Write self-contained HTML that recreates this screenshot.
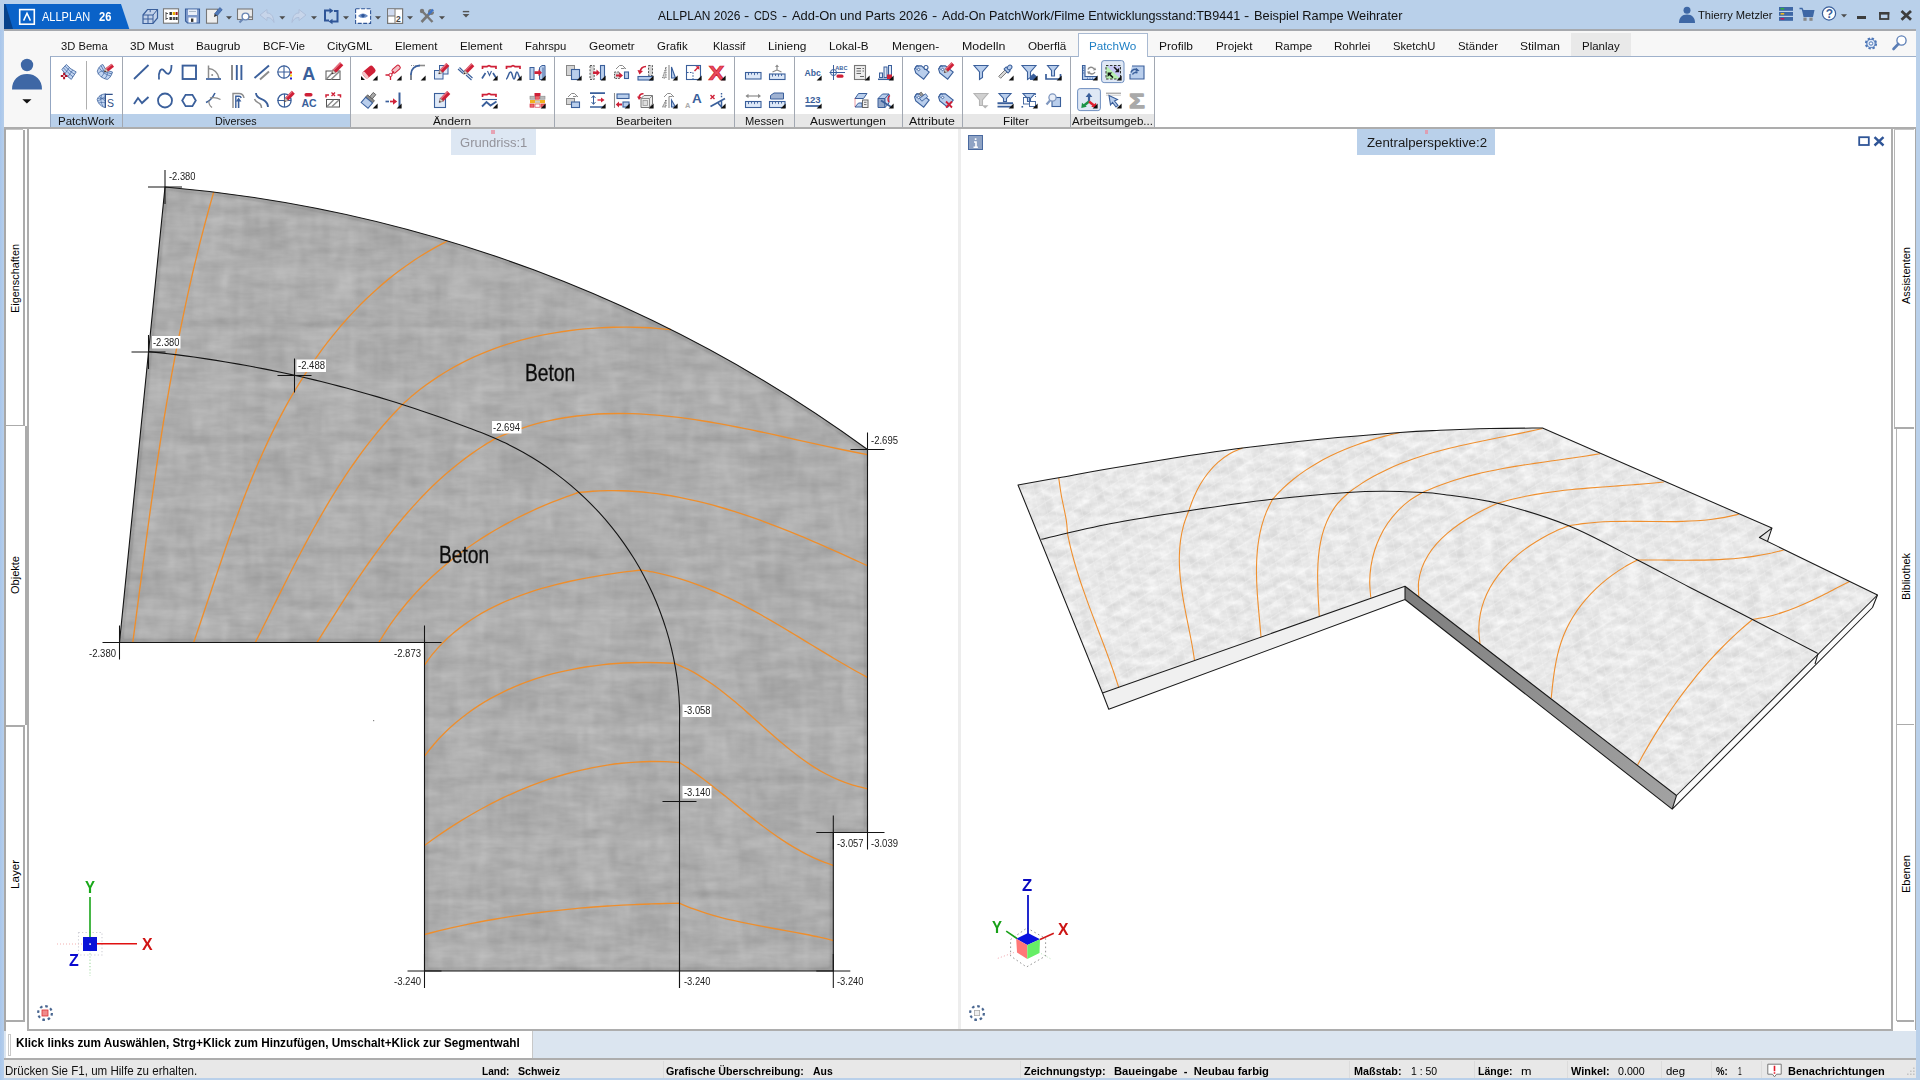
<!DOCTYPE html>
<html lang="de"><head><meta charset="utf-8"><title>ALLPLAN 2026</title>
<style>
html,body{margin:0;padding:0;background:#fff;}
body{width:1920px;height:1080px;overflow:hidden;font-family:"Liberation Sans",sans-serif;}
#app{position:relative;width:1920px;height:1080px;overflow:hidden;background:#b9d0ea;}
.a{position:absolute;}
.t{position:absolute;white-space:nowrap;line-height:1;transform-origin:0 0;display:block;}
.v{position:absolute;white-space:nowrap;line-height:1;transform-origin:0 0;display:block;font-size:12px;color:#000;}
svg{position:absolute;left:0;top:0;overflow:visible;}

</style></head>
<body>
<div id="app">
<div class="a" id="titlebar" style="left:0;top:0;width:1920px;height:30px;background:#b9d0ea"></div>
<div class="a" style="left:0px;top:30px;width:4.3px;height:1050px;background:linear-gradient(90deg,#a8c6ec,#b6ceea);"></div>
<div class="a" style="left:4px;top:30px;width:1912px;height:98px;background:#f7f7f7;"></div>
<div class="a" style="left:4px;top:28.9px;width:1912px;height:1.9px;background:#a6a9ae;"></div>
<svg width="140" height="32" viewBox="0 0 140 32"><polygon points="4,4 121,4 129.3,29 4,29" fill="#0a62c8"/><polygon points="4,4 5.5,4 13,29 4,29" fill="#07428a"/><rect x="19.7" y="9.6" width="14.6" height="14.6" fill="none" stroke="#fff" stroke-width="1.6"/><path d="M23.6 20.6 L27 13.2 L30.4 20.6" fill="none" stroke="#fff" stroke-width="1.5"/></svg>
<span class="t" style="left:41.50px;top:11.24px;font-size:12px;color:#fff;transform:scaleX(0.9165);">ALLPLAN</span>
<span class="t" style="left:98.80px;top:11.24px;font-size:12px;color:#fff;font-weight:bold;transform:scaleX(0.9291);">26</span>
<span class="t" style="left:658.30px;top:9.30px;font-size:13px;color:#111;transform:scaleX(0.9195);">ALLPLAN 2026</span>
<span class="t" style="left:744.20px;top:9.30px;font-size:13px;color:#111;transform:scaleX(1.2013);">-</span>
<span class="t" style="left:754.30px;top:9.30px;font-size:13px;color:#111;transform:scaleX(0.8379);">CDS</span>
<span class="t" style="left:781.80px;top:9.30px;font-size:13px;color:#111;transform:scaleX(1.2013);">-</span>
<span class="t" style="left:791.70px;top:9.30px;font-size:13px;color:#111;transform:scaleX(0.9928);">Add-On und Parts 2026</span>
<span class="t" style="left:931.80px;top:9.30px;font-size:13px;color:#111;transform:scaleX(1.2013);">-</span>
<span class="t" style="left:941.70px;top:9.30px;font-size:13px;color:#111;transform:scaleX(0.9699);">Add-On PatchWork/Filme Entwicklungsstand:TB9441</span>
<span class="t" style="left:1244.20px;top:9.30px;font-size:13px;color:#111;transform:scaleX(1.2013);">-</span>
<span class="t" style="left:1254.30px;top:9.30px;font-size:13px;color:#111;transform:scaleX(0.9843);">Beispiel Rampe Weihrater</span>
<span class="t" style="left:1698.30px;top:9.73px;font-size:11.3px;color:#111;transform:scaleX(0.9876);">Thierry Metzler</span>
<div class="a" style="left:50px;top:55.8px;width:1866px;height:71.7px;background:#fff;border-top:1px solid #9fb1cb;border-left:1px solid #93a6c2;box-sizing:border-box;"></div>
<div class="a" style="left:1571px;top:33px;width:60px;height:22.8px;background:#e9e9e9;"></div>
<div class="a" style="left:1078px;top:33px;width:70px;height:24px;background:#fff;border:1px solid #a9bad2;border-bottom:none;box-sizing:border-box;"></div>
<span class="t" style="left:61.00px;top:40.75px;font-size:11.4px;color:#111;transform:scaleX(0.9828);">3D Bema</span>
<span class="t" style="left:130.30px;top:40.75px;font-size:11.4px;color:#111;transform:scaleX(1.0296);">3D Must</span>
<span class="t" style="left:196.30px;top:40.75px;font-size:11.4px;color:#111;transform:scaleX(1.0302);">Baugrub</span>
<span class="t" style="left:263.30px;top:40.75px;font-size:11.4px;color:#111;transform:scaleX(0.9798);">BCF-Vie</span>
<span class="t" style="left:327.30px;top:40.75px;font-size:11.4px;color:#111;transform:scaleX(1.0240);">CityGML</span>
<span class="t" style="left:395.30px;top:40.75px;font-size:11.4px;color:#111;transform:scaleX(1.0139);">Element</span>
<span class="t" style="left:460.30px;top:40.75px;font-size:11.4px;color:#111;transform:scaleX(1.0139);">Element</span>
<span class="t" style="left:525.30px;top:40.75px;font-size:11.4px;color:#111;transform:scaleX(0.9900);">Fahrspu</span>
<span class="t" style="left:589.30px;top:40.75px;font-size:11.4px;color:#111;transform:scaleX(1.0306);">Geometr</span>
<span class="t" style="left:657.30px;top:40.75px;font-size:11.4px;color:#111;transform:scaleX(1.0098);">Grafik</span>
<span class="t" style="left:713.30px;top:40.75px;font-size:11.4px;color:#111;transform:scaleX(0.9650);">Klassif</span>
<span class="t" style="left:768.30px;top:40.75px;font-size:11.4px;color:#111;transform:scaleX(1.0445);">Linieng</span>
<span class="t" style="left:829.30px;top:40.75px;font-size:11.4px;color:#111;transform:scaleX(1.0271);">Lokal-B</span>
<span class="t" style="left:891.70px;top:40.75px;font-size:11.4px;color:#111;transform:scaleX(1.0514);">Mengen-</span>
<span class="t" style="left:962.30px;top:40.75px;font-size:11.4px;color:#111;transform:scaleX(1.0872);">Modelln</span>
<span class="t" style="left:1028.30px;top:40.75px;font-size:11.4px;color:#111;transform:scaleX(1.0273);">Oberflä</span>
<span class="t" style="left:1089.30px;top:40.75px;font-size:11.4px;color:#1e7fc4;transform:scaleX(1.0295);">PatchWo</span>
<span class="t" style="left:1159.30px;top:40.75px;font-size:11.4px;color:#111;transform:scaleX(1.0522);">Profilb</span>
<span class="t" style="left:1216.30px;top:40.75px;font-size:11.4px;color:#111;transform:scaleX(1.0260);">Projekt</span>
<span class="t" style="left:1275.00px;top:40.75px;font-size:11.4px;color:#111;transform:scaleX(1.0150);">Rampe</span>
<span class="t" style="left:1334.30px;top:40.75px;font-size:11.4px;color:#111;transform:scaleX(1.0079);">Rohrlei</span>
<span class="t" style="left:1393.30px;top:40.75px;font-size:11.4px;color:#111;transform:scaleX(0.9841);">SketchU</span>
<span class="t" style="left:1458.30px;top:40.75px;font-size:11.4px;color:#111;transform:scaleX(1.0019);">Ständer</span>
<span class="t" style="left:1520.00px;top:40.75px;font-size:11.4px;color:#111;transform:scaleX(1.0523);">Stilman</span>
<span class="t" style="left:1582.30px;top:40.75px;font-size:11.4px;color:#111;transform:scaleX(1.0083);">Planlay</span>
<div class="a" style="left:50.5px;top:114px;width:72.3px;height:13.3px;background:#b9d0ea;"></div>
<div class="a" style="left:122.8px;top:114px;width:228.0px;height:13.3px;background:#b9d0ea;"></div>
<div class="a" style="left:350.8px;top:114px;width:203.99999999999994px;height:13.3px;background:#e7e7e7;"></div>
<div class="a" style="left:554.8px;top:114px;width:180.0px;height:13.3px;background:#e7e7e7;"></div>
<div class="a" style="left:734.8px;top:114px;width:60.0px;height:13.3px;background:#e7e7e7;"></div>
<div class="a" style="left:794.8px;top:114px;width:108.0px;height:13.3px;background:#e7e7e7;"></div>
<div class="a" style="left:902.8px;top:114px;width:60.0px;height:13.3px;background:#e7e7e7;"></div>
<div class="a" style="left:962.8px;top:114px;width:108.29999999999995px;height:13.3px;background:#e7e7e7;"></div>
<div class="a" style="left:1071.1px;top:114px;width:83.70000000000005px;height:13.3px;background:#e7e7e7;"></div>
<div class="a" style="left:121.8px;top:57px;width:1px;height:70px;background:#a2a8b2;"></div>
<div class="a" style="left:349.8px;top:57px;width:1px;height:70px;background:#a2a8b2;"></div>
<div class="a" style="left:553.8px;top:57px;width:1px;height:70px;background:#a2a8b2;"></div>
<div class="a" style="left:733.8px;top:57px;width:1px;height:70px;background:#a2a8b2;"></div>
<div class="a" style="left:793.8px;top:57px;width:1px;height:70px;background:#a2a8b2;"></div>
<div class="a" style="left:901.8px;top:57px;width:1px;height:70px;background:#a2a8b2;"></div>
<div class="a" style="left:961.8px;top:57px;width:1px;height:70px;background:#a2a8b2;"></div>
<div class="a" style="left:1070.1px;top:57px;width:1px;height:70px;background:#a2a8b2;"></div>
<div class="a" style="left:1153.8px;top:57px;width:1px;height:70px;background:#a2a8b2;"></div>
<span class="t" style="left:58.00px;top:115.55px;font-size:11.4px;color:#111;transform:scaleX(1.0137);">PatchWork</span>
<span class="t" style="left:215.30px;top:115.55px;font-size:11.4px;color:#111;transform:scaleX(0.9404);">Diverses</span>
<span class="t" style="left:433.00px;top:115.55px;font-size:11.4px;color:#111;transform:scaleX(1.0338);">Ändern</span>
<span class="t" style="left:616.00px;top:115.55px;font-size:11.4px;color:#111;transform:scaleX(1.0157);">Bearbeiten</span>
<span class="t" style="left:745.00px;top:115.55px;font-size:11.4px;color:#111;transform:scaleX(0.9771);">Messen</span>
<span class="t" style="left:810.00px;top:115.55px;font-size:11.4px;color:#111;transform:scaleX(1.0429);">Auswertungen</span>
<span class="t" style="left:909.00px;top:115.55px;font-size:11.4px;color:#111;transform:scaleX(1.0836);">Attribute</span>
<span class="t" style="left:1003.30px;top:115.55px;font-size:11.4px;color:#111;transform:scaleX(1.0264);">Filter</span>
<span class="t" style="left:1072.00px;top:115.55px;font-size:11.4px;color:#111;transform:scaleX(1.0146);">Arbeitsumgeb...</span>
<div class="a" style="left:4px;top:127px;width:1912px;height:1.8px;background:#adadad;"></div>
<div class="a" style="left:4px;top:128.8px;width:1912px;height:902.2px;background:#fff;"></div>
<div class="a" style="left:4px;top:128.8px;width:1.5px;height:930px;background:#a8a8a8;"></div>
<div class="a" style="left:27.3px;top:128.8px;width:1.8px;height:901px;background:#adadad;"></div>
<div class="a" style="left:1891.3px;top:128.8px;width:1.8px;height:901px;background:#adadad;"></div>
<div class="a" style="left:1914.5px;top:128.8px;width:1.5px;height:901px;background:#a8a8a8;"></div>
<div class="a" style="left:958px;top:129px;width:3px;height:900px;background:#ededed;"></div>
<div class="a" style="left:27.3px;top:1029px;width:1866px;height:1.8px;background:#adadad;"></div>
<div class="a" style="left:5.6px;top:129.2px;width:17.5px;height:1px;background:#c4c4c4;"></div>
<div class="a" style="left:5.6px;top:130px;width:17.5px;height:294.5px;background:#fff;"></div><div class="a" style="left:23.1px;top:130px;width:1.7px;height:296.0px;background:#ababab;"></div><div class="a" style="left:5.6px;top:424.5px;width:17.5px;height:1.5px;background:#ababab;"></div>
<div class="a" style="left:5.6px;top:426px;width:19.4px;height:299px;background:#fff;"></div><div class="a" style="left:25px;top:426px;width:2.5px;height:299px;background:#ababab;"></div><div class="a" style="left:5.6px;top:725px;width:19.4px;height:1.5px;background:#ababab;"></div>
<div class="a" style="left:5.6px;top:727px;width:17.5px;height:293px;background:#fff;"></div><div class="a" style="left:23.1px;top:727px;width:1.7px;height:294.5px;background:#ababab;"></div><div class="a" style="left:5.6px;top:1020px;width:17.5px;height:1.5px;background:#ababab;"></div>
<div class="a" style="left:1894.4px;top:129.2px;width:20px;height:1px;background:#c4c4c4;"></div>
<div class="a" style="left:1894.3px;top:130px;width:1px;height:298.5px;background:#b4b4b4;"></div><div class="a" style="left:1895.3px;top:427px;width:19.100000000000136px;height:1.6px;background:#ababab;"></div>
<div class="a" style="left:1896px;top:428.6px;width:1px;height:296.5px;background:#b4b4b4;"></div><div class="a" style="left:1897px;top:723.6px;width:17.40000000000009px;height:1.6px;background:#ababab;"></div>
<div class="a" style="left:1896px;top:725.4px;width:1px;height:296.1px;background:#b4b4b4;"></div><div class="a" style="left:1897px;top:1020px;width:17.40000000000009px;height:1.6px;background:#ababab;"></div>
<span class="v" style="left:10.48px;top:312.50px;font-size:11px;transform:rotate(-90deg) scaleX(0.9898);">Eigenschaften</span>
<span class="v" style="left:10.48px;top:594.00px;font-size:11px;transform:rotate(-90deg) scaleX(1.0025);">Objekte</span>
<span class="v" style="left:10.48px;top:889.00px;font-size:11px;transform:rotate(-90deg) scaleX(1.0540);">Layer</span>
<span class="v" style="left:1900.88px;top:304.00px;font-size:11px;transform:rotate(-90deg) scaleX(1.0024);">Assistenten</span>
<span class="v" style="left:1900.88px;top:600.00px;font-size:11px;transform:rotate(-90deg) scaleX(0.9855);">Bibliothek</span>
<span class="v" style="left:1900.88px;top:892.50px;font-size:11px;transform:rotate(-90deg) scaleX(1.0020);">Ebenen</span>
<div class="a" style="left:451.2px;top:129px;width:84.8px;height:25.8px;background:#dde7f3;"></div>
<div class="a" style="left:1357.2px;top:129px;width:138.3px;height:25.8px;background:#b9d0ea;"></div>
<div class="a" style="left:491.3px;top:130.4px;width:3.4px;height:3.2px;background:#e6a3b4;"></div>
<div class="a" style="left:1424.8px;top:130.4px;width:3.2px;height:3.2px;background:#dd9fb3;"></div>
<span class="t" style="left:460.30px;top:136.52px;font-size:12.5px;color:#93939b;transform:scaleX(1.0418);">Grundriss:1</span>
<span class="t" style="left:1367.00px;top:136.72px;font-size:12.5px;color:#1a1a1a;transform:scaleX(1.0597);">Zentralperspektive:2</span>
<div class="a" style="left:4px;top:1030.8px;width:1912px;height:27.5px;background:#dbe5f0;"></div>
<div class="a" style="left:5.5px;top:1030.8px;width:527.5px;height:27.5px;background:#fff;border-right:1.5px solid #c8c8c8;box-sizing:border-box;"></div>
<div class="a" style="left:8px;top:1033.5px;width:3px;height:22px;background:#fff;border:1px solid #c9c9c9;box-sizing:border-box;"></div>
<div class="a" style="left:4px;top:1058.2px;width:1912px;height:1.8px;background:#adadad;"></div>
<div class="a" style="left:4px;top:1060px;width:1912px;height:18px;background:#e8e8e8;"></div>
<span class="t" style="left:16.30px;top:1037.43px;font-size:12.6px;color:#000;font-weight:bold;transform:scaleX(0.9345);">Klick links zum Auswählen, Strg+Klick zum Hinzufügen, Umschalt+Klick zur Segmentwahl</span>
<span class="t" style="left:5.30px;top:1064.84px;font-size:12px;color:#111;transform:scaleX(0.9639);">Drücken Sie F1, um Hilfe zu erhalten.</span>
<span class="t" style="left:482.00px;top:1065.18px;font-size:11.6px;color:#000;font-weight:bold;transform:scaleX(0.8711);">Land:</span>
<span class="t" style="left:518.00px;top:1065.18px;font-size:11.6px;color:#000;font-weight:bold;transform:scaleX(0.9176);">Schweiz</span>
<span class="t" style="left:666.30px;top:1065.18px;font-size:11.6px;color:#000;font-weight:bold;transform:scaleX(0.9228);">Grafische Überschreibung:</span>
<span class="t" style="left:813.30px;top:1065.18px;font-size:11.6px;color:#000;font-weight:bold;transform:scaleX(0.8990);">Aus</span>
<span class="t" style="left:1023.80px;top:1065.18px;font-size:11.6px;color:#000;font-weight:bold;transform:scaleX(0.9462);">Zeichnungstyp:</span>
<span class="t" style="left:1114.30px;top:1065.18px;font-size:11.6px;color:#000;font-weight:bold;transform:scaleX(0.9659);white-space:pre;">Baueingabe  -  Neubau farbig</span>
<span class="t" style="left:1353.80px;top:1065.18px;font-size:11.6px;color:#000;font-weight:bold;transform:scaleX(0.9330);">Maßstab:</span>
<span class="t" style="left:1410.80px;top:1065.18px;font-size:11.6px;color:#000;transform:scaleX(0.9028);">1 : 50</span>
<span class="t" style="left:1478.00px;top:1065.18px;font-size:11.6px;color:#000;font-weight:bold;transform:scaleX(0.9074);">Länge:</span>
<span class="t" style="left:1521.30px;top:1065.18px;font-size:11.6px;color:#000;transform:scaleX(1.0867);">m</span>
<span class="t" style="left:1571.30px;top:1065.18px;font-size:11.6px;color:#000;font-weight:bold;transform:scaleX(0.9406);">Winkel:</span>
<span class="t" style="left:1618.30px;top:1065.18px;font-size:11.6px;color:#000;transform:scaleX(0.9199);">0.000</span>
<span class="t" style="left:1665.50px;top:1065.18px;font-size:11.6px;color:#000;transform:scaleX(0.9818);">deg</span>
<span class="t" style="left:1715.80px;top:1065.18px;font-size:11.6px;color:#000;font-weight:bold;transform:scaleX(0.8253);">%:</span>
<span class="t" style="left:1737.50px;top:1065.18px;font-size:11.6px;color:#000;transform:scaleX(0.5891);">1</span>
<span class="t" style="left:1787.50px;top:1065.18px;font-size:11.6px;color:#000;font-weight:bold;transform:scaleX(0.9506);">Benachrichtungen</span>
<div class="a" style="left:662.5px;top:1061px;width:1px;height:17px;background:#dcdcdc;"></div>
<div class="a" style="left:1020px;top:1061px;width:1px;height:17px;background:#dcdcdc;"></div>
<div class="a" style="left:1348.8px;top:1061px;width:1px;height:17px;background:#dcdcdc;"></div>
<div class="a" style="left:1473.8px;top:1061px;width:1px;height:17px;background:#dcdcdc;"></div>
<div class="a" style="left:1567px;top:1061px;width:1px;height:17px;background:#dcdcdc;"></div>
<div class="a" style="left:1661.3px;top:1061px;width:1px;height:17px;background:#dcdcdc;"></div>
<div class="a" style="left:1711.3px;top:1061px;width:1px;height:17px;background:#dcdcdc;"></div>
<div class="a" style="left:1761.3px;top:1061px;width:1px;height:17px;background:#dcdcdc;"></div>
<svg width="1920" height="1080" viewBox="0 0 1920 1080"><path d="M1767.8 1064.2 h13.4 v10 h-4.6 l-2.1 2.6 l-2.1 -2.6 h-4.6 z" fill="#fff" stroke="#777" stroke-width="1"/><path d="M1774.5 1065.8 v5.4 M1774.5 1072.3 v1.5" stroke="#e21c2a" stroke-width="1.6"/><path d="M1913 1067.5h1.6v1.6h-1.6z M1910 1070.5h1.6v1.6h-1.6z M1913 1070.5h1.6v1.6h-1.6z M1907 1073.5h1.6v1.6h-1.6z M1910 1073.5h1.6v1.6h-1.6z M1913 1073.5h1.6v1.6h-1.6z" fill="#c4c4c4"/></svg>
<svg width="1920" height="130" viewBox="0 0 1920 130" id="icons"><g fill="#3e67a5"><circle cx="27" cy="65" r="6.2"/><path d="M12 89.5 C12 80 18 74 27 74 C36 74 42 80 42 89.5 Z"/></g>
<polygon points="22.3,99.2 31.5,99.2 26.9,103.6" fill="#111"/>
<g transform="translate(60.0,64.0)"><path d="M1.9 5.4 L6.3 0.5 Q10.5 5.5 16.2 7.9 L11.3 15.4 Q5.5 12 1.9 5.4 Z" fill="#c3d6f2" stroke="#3a5f9b" stroke-width="0.8" /><path d="M3.4 3.8 Q8 9 13 12.9 M4.9 2.1 Q9.5 7.5 14.6 10.3 M5 9.6 L9.3 3.7 M8 12.6 L12.6 6.2" fill="none" stroke="#3a5f9b" stroke-width="0.7" /><path d="M4.1 8.7 V15.3 M0.8 12 H7.4" fill="none" stroke="#b01428" stroke-width="2" /><rect x="3.3" y="11.2" width="1.6" height="1.6" fill="#fff"/></g>
<g transform="translate(97.0,64.0)"><path d="M0.3 7.2 C1.5 3 4 1 5.8 0.5 L9.2 6.2 L15.5 8 C14.5 12 12 14.8 10.4 15.4 C5 14.5 1.2 11 0.3 7.2 Z" fill="#c3d6f2" stroke="#3a5f9b" stroke-width="0.8" /><path d="M2.2 3.6 C4 7 8 10.5 13.6 12 M4 1.6 L7.2 7.5 L15 10 M0.8 9.8 C3 7.5 5 6.5 7 7.2 M4.3 13 C6 11 7.5 9 7.2 7.5 M7.5 14.8 C9.5 13 10.5 11 10.3 8.6" fill="none" stroke="#3a5f9b" stroke-width="0.7" /><g transform="translate(7.30,7.90) rotate(-38)"><path d="M0 0 L3.2 -2 H10.8 V2 H3.2 Z" fill="#cf2037"/><path d="M3.2 -2 H10.8 V-0.7 H3.2 Z" fill="#e4707f"/><path d="M0 0 L3.2 -2 V2 Z" fill="#f0e4c8" stroke="#777" stroke-width="0.4"/><path d="M0 0 L1.6 -1 V1 Z" fill="#111"/></g></g>
<g transform="translate(97.0,92.0)"><path d="M8.3 2 C4 2 0.6 5 0.2 7.6 C1 11.5 4.5 15 8.3 15.5 Z" fill="#c3d6f2" stroke="#3a5f9b" stroke-width="0.8" /><path d="M4.6 3 C3.2 6.5 3.8 11 6 14.6 M0.6 6.6 C3 6 6 6.2 8.3 6.8 M1.6 11 C4 10.2 6 10.3 8.3 10.8 M2.2 4.4 L8.3 9 M1 9 L8.3 4.6" fill="none" stroke="#3a5f9b" stroke-width="0.6" /><path d="M8.4 1.4 V15.8 M8.4 2.4 H15.7" fill="none" stroke="#2f4f88" stroke-width="1.1" /><text x="10.1" y="14.6" font-size="10.5" fill="#2f4f88"  font-family="Liberation Sans, sans-serif" >S</text></g>
<rect x="86" y="61" width="0.9" height="48.5" fill="#a6a6a6"/>
<g transform="translate(133.0,64.0)"><path d="M1 15 L15.5 1" fill="none" stroke="#3a5f9b" stroke-width="1.8" /></g>
<g transform="translate(157.0,64.0)"><path d="M2 15.5 C1 8 4 3.5 6.5 6 C8.5 8.5 10 11 12 9.5 C14 8 14.5 4 14.5 1" fill="none" stroke="#3a5f9b" stroke-width="1.8" /></g>
<g transform="translate(181.0,64.0)"><rect x="1.6" y="1.6" width="13.4" height="13.4" fill="none" stroke="#3a5f9b" stroke-width="1.9"/></g>
<g transform="translate(205.0,64.0)"><path d="M3.5 1.5 V14" fill="none" stroke="#8c8c8c" stroke-width="1.5" /><path d="M3.5 4.5 C9 5 13 9 14 14.5" fill="none" stroke="#8c8c8c" stroke-width="1.5" /><path d="M1 15 H16" fill="none" stroke="#3a5f9b" stroke-width="1.7" /><circle cx="7.2" cy="11" r="1" fill="#8c8c8c"/></g>
<g transform="translate(229.0,64.0)"><path d="M3 1 V16" fill="none" stroke="#8c8c8c" stroke-width="2" /><path d="M7.8 1 V16 M12.4 1 V16" fill="none" stroke="#3a5f9b" stroke-width="1.9" /></g>
<g transform="translate(253.0,64.0)"><path d="M1.5 14 L16 1.5" fill="none" stroke="#3a5f9b" stroke-width="1.9" /><path d="M7 15.5 L16 7.5" fill="none" stroke="#8c8c8c" stroke-width="1.9" /></g>
<g transform="translate(277.0,64.0)"><circle cx="7" cy="8" r="6.2" fill="none" stroke="#3a5f9b" stroke-width="1.2"/><path d="M0.5 8 H13.5 M7 1.5 V14.5" fill="none" stroke="#3a5f9b" stroke-width="1.1" /><rect x="13" y="7.5" width="2" height="2" fill="#d11"/><rect x="13" y="10.5" width="2" height="2" fill="#fc0"/><rect x="13" y="13.5" width="2" height="2" fill="#22c"/></g>
<g transform="translate(301.0,64.0)"><text x="1.2" y="15.6" font-size="18" fill="#3a5f9b" font-weight="bold" font-family="Liberation Sans, sans-serif" >A</text></g>
<g transform="translate(325.0,64.0)"><rect x="1" y="7" width="14" height="8.5" fill="#fff" stroke="#555" stroke-width="1" /><path d="M1 15.5 L9 7 M6 15.5 L15 7" fill="none" stroke="#8c8c8c" stroke-width="1.6" /><g transform="translate(6.70,10.08) rotate(-46) scale(1.15)"><path d="M0 0 L3.4 -2 H12.5 V2 H3.4 Z" fill="#cf2037"/><path d="M3.4 -2 H12.5 V-0.7 H3.4 Z" fill="#e4707f"/><path d="M0 0 L3.4 -2 V2 Z" fill="#d8d2c4" stroke="#777" stroke-width="0.5"/><path d="M0 0 L1.4 -0.85 V0.85 Z" fill="#222"/></g></g>
<g transform="translate(133.0,92.0)"><path d="M1 12 L5 6 L9 11 L15.5 5" fill="none" stroke="#3a5f9b" stroke-width="1.9" /></g>
<g transform="translate(157.0,92.0)"><circle cx="8" cy="8.5" r="7" fill="none" stroke="#3a5f9b" stroke-width="1.8"/></g>
<g transform="translate(181.0,92.0)"><path d="M1.2 8.5 L4.6 2.8 H11.4 L14.8 8.5 L11.4 14.2 H4.6 Z" fill="none" stroke="#3a5f9b" stroke-width="1.8" /></g>
<g transform="translate(205.0,92.0)"><path d="M1 10.5 C5 9 8 5 10 1" fill="none" stroke="#3a5f9b" stroke-width="1.6" /><path d="M5 6 C9 5 13 6 15.5 7.5" fill="none" stroke="#8c8c8c" stroke-width="1.3" /><path d="M4 8.5 C3.5 11 5 14 7 15.5" fill="none" stroke="#8c8c8c" stroke-width="1.3" /></g>
<g transform="translate(229.0,92.0)"><path d="M4 16 V1.5 H10 C12.5 1.5 14.5 3 15 6" fill="none" stroke="#8c8c8c" stroke-width="1.4" /><path d="M6.8 16 V4.3 H10 C11 4.3 12 5 12.2 6" fill="none" stroke="#3a5f9b" stroke-width="1.4" /><path d="M9.6 16 V8" fill="none" stroke="#3a5f9b" stroke-width="1.6" /><polygon points="6.8,9.5 9.6,5.5 12.4,9.5" fill="#3a5f9b"/></g>
<g transform="translate(253.0,92.0)"><path d="M3 1 C3 7 9 6 12 9 C14.5 11 15 13 15 15" fill="none" stroke="#3a5f9b" stroke-width="1.8" /><path d="M1.5 7 C3 11 6 10 7.5 12.5 C8.5 14 8.5 15 8.5 16" fill="none" stroke="#8c8c8c" stroke-width="1.5" /></g>
<g transform="translate(277.0,92.0)"><circle cx="7.5" cy="8.5" r="6.6" fill="none" stroke="#3a5f9b" stroke-width="1.3"/><path d="M0.5 8.5 H14 M7.5 2 V15" fill="none" stroke="#3a5f9b" stroke-width="1.1" /><g transform="translate(7.20,9.66) rotate(-46) scale(1.05)"><path d="M0 0 L3.4 -2 H12.5 V2 H3.4 Z" fill="#cf2037"/><path d="M3.4 -2 H12.5 V-0.7 H3.4 Z" fill="#e4707f"/><path d="M0 0 L3.4 -2 V2 Z" fill="#d8d2c4" stroke="#777" stroke-width="0.5"/><path d="M0 0 L1.4 -0.85 V0.85 Z" fill="#222"/></g></g>
<g transform="translate(301.0,92.0)"><rect x="3.5" y="1" width="8" height="3.4" rx="1.6" fill="#cf2037"/><text x="0.4" y="15.2" font-size="10.5" fill="#3a5f9b" font-weight="bold" font-family="Liberation Sans, sans-serif" >AC</text></g>
<g transform="translate(325.0,92.0)"><rect x="1.5" y="7.5" width="13" height="7.5" fill="#fff" stroke="#555" stroke-width="1" /><path d="M2 14.5 L8.5 8 M7 14.5 L14 8" fill="none" stroke="#8c8c8c" stroke-width="1.5" /><path d="M1 5.5 V3 H4 M15.5 5.5 V3 H12.5" fill="none" stroke="#cf2037" stroke-width="1.5" /><path d="M6.5 0.5 L10 4 M10 0.5 L6.5 4" fill="none" stroke="#cf2037" stroke-width="1.3" /></g>
<g transform="translate(361.0,64.0)"><g transform="rotate(-40 8 8)"><rect x="1.5" y="4" width="13" height="8" rx="2.4" fill="#cf2037"/><rect x="1.5" y="4" width="3.3" height="8" rx="1.2" fill="#f4c4c8"/></g><polygon points="0,12 0,16 4,16" fill="#111"/><polygon points="16.6,11.6 16.6,16.6 11.6,16.6" fill="#111"/></g>
<g transform="translate(385.0,64.0)"><g transform="rotate(-42 11 5)"><rect x="6.5" y="3" width="9" height="4.4" rx="1.6" fill="#f4c0c6" stroke="#cf2037" stroke-width="1"/></g><path d="M0.5 11 H4.5 M5.5 12 V16 M6.5 10 L9 7.5" fill="none" stroke="#cf2037" stroke-width="1.3" /><circle cx="5.5" cy="11" r="1.6" fill="#fff" stroke="#cf2037" stroke-width="1"/><polygon points="16.6,11.6 16.6,16.6 11.6,16.6" fill="#111"/></g>
<g transform="translate(409.0,64.0)"><path d="M2 1.5 H7" fill="none" stroke="#8c8c8c" stroke-width="1" stroke-dasharray="1 1.2"/><path d="M2 16 V10 C2 5 6 1.5 11 1.5" fill="none" stroke="#3a5f9b" stroke-width="1.8" /><path d="M11 1.5 H16" fill="none" stroke="#8c8c8c" stroke-width="1.6" /><path d="M2 11 V16" fill="none" stroke="#8c8c8c" stroke-width="1.6" /><polygon points="16.6,11.6 16.6,16.6 11.6,16.6" fill="#111"/></g>
<g transform="translate(433.0,64.0)"><rect x="6.5" y="1.5" width="8.5" height="8.5" fill="#dfe9f7" stroke="#3a5f9b" stroke-width="1" /><rect x="1.5" y="6.5" width="8.5" height="8.5" fill="#dfe9f7" stroke="#3a5f9b" stroke-width="1" /><g transform="translate(5.70,9.96) rotate(-46) scale(1.05)"><path d="M0 0 L3.4 -2 H12.5 V2 H3.4 Z" fill="#cf2037"/><path d="M3.4 -2 H12.5 V-0.7 H3.4 Z" fill="#e4707f"/><path d="M0 0 L3.4 -2 V2 Z" fill="#d8d2c4" stroke="#777" stroke-width="0.5"/><path d="M0 0 L1.4 -0.85 V0.85 Z" fill="#222"/></g></g>
<g transform="translate(457.0,64.0)"><path d="M1 5 L6 9.5 M2.5 3.5 L7 8 M9 11 L14.5 16 M10.5 9.5 L15.5 14" fill="none" stroke="#3a5f9b" stroke-width="1.1" /><g transform="translate(6.70,10.16) rotate(-46) scale(1.05)"><path d="M0 0 L3.4 -2 H12.5 V2 H3.4 Z" fill="#cf2037"/><path d="M3.4 -2 H12.5 V-0.7 H3.4 Z" fill="#e4707f"/><path d="M0 0 L3.4 -2 V2 Z" fill="#d8d2c4" stroke="#777" stroke-width="0.5"/><path d="M0 0 L1.4 -0.85 V0.85 Z" fill="#222"/></g></g>
<g transform="translate(481.0,64.0)"><path d="M1.5 5 V2.6 H6 L8 1.6 L10 2.6 H15 V5" fill="none" stroke="#cf2037" stroke-width="1.7" /><path d="M1 14.5 L4.5 9 M15.5 14.5 L12 9" fill="none" stroke="#3a5f9b" stroke-width="1.7" /><path d="M6.5 7 L8.5 11.5 L10.5 7" fill="none" stroke="#3a5f9b" stroke-width="1.1" /><polygon points="16.6,11.6 16.6,16.6 11.6,16.6" fill="#111"/></g>
<g transform="translate(505.0,64.0)"><path d="M1.5 5 V2.6 H6 L8 1.6 L10 2.6 H15 V5" fill="none" stroke="#cf2037" stroke-width="1.7" /><path d="M1 15 C3 15 3.5 8 5.5 8 C7.5 8 7.5 15 9 15 C10.5 15 10.5 8 12 8 C13.5 8 14 15 16 15" fill="none" stroke="#3a5f9b" stroke-width="1.5" /><polygon points="16.6,11.6 16.6,16.6 11.6,16.6" fill="#111"/></g>
<g transform="translate(529.0,64.0)"><rect x="1" y="3.5" width="4" height="12" fill="#b9ceec" stroke="#3a5f9b" stroke-width="1" /><path d="M10.5 3.5 L13 1.5 H16 V13 L14 15.5 H10.5 Z" fill="#b9ceec" stroke="#3a5f9b" stroke-width="1" /><path d="M14 3.5 V15.5" fill="none" stroke="#3a5f9b" stroke-width="0.9" /><path d="M5.5 7.3 H9.5 V5.3 L13 8.7 L9.5 12.1 V10.1 H5.5 Z" fill="#cf2037"/><polygon points="16.6,11.6 16.6,16.6 11.6,16.6" fill="#111"/></g>
<g transform="translate(361.0,92.0)"><g transform="rotate(40 8 8)"><rect x="6.4" y="-0.5" width="3.4" height="6" fill="#aaa" stroke="#555" stroke-width="0.8"/><rect x="3.6" y="5" width="9" height="3" fill="#888" stroke="#555" stroke-width="0.8"/><rect x="3.6" y="8" width="9" height="7" fill="#b9ceec" stroke="#3a5f9b" stroke-width="1"/></g><polygon points="16.6,11.6 16.6,16.6 11.6,16.6" fill="#111"/></g>
<g transform="translate(385.0,92.0)"><path d="M0.5 9.5 H4" fill="none" stroke="#3a5f9b" stroke-width="1.7" /><path d="M5 9.5 H9" fill="none" stroke="#cf2037" stroke-width="1.7" /><polygon points="8,6.3 12.2,9.5 8,12.7" fill="#cf2037"/><path d="M14.5 0.5 V16" fill="none" stroke="#3a5f9b" stroke-width="2" /><polygon points="16.6,11.6 16.6,16.6 11.6,16.6" fill="#111"/></g>
<g transform="translate(433.0,92.0)"><rect x="1.5" y="1.5" width="11" height="14" fill="#dfe9f7" stroke="#3a5f9b" stroke-width="1.1" /><g transform="translate(6.20,10.42) rotate(-46) scale(1.1)"><path d="M0 0 L3.4 -2 H12.5 V2 H3.4 Z" fill="#cf2037"/><path d="M3.4 -2 H12.5 V-0.7 H3.4 Z" fill="#e4707f"/><path d="M0 0 L3.4 -2 V2 Z" fill="#d8d2c4" stroke="#777" stroke-width="0.5"/><path d="M0 0 L1.4 -0.85 V0.85 Z" fill="#222"/></g></g>
<g transform="translate(481.0,92.0)"><path d="M1.5 5 V2.6 H6 L8 1.6 L10 2.6 H15 V5" fill="none" stroke="#cf2037" stroke-width="1.7" /><path d="M1 7.5 H16" fill="none" stroke="#3a5f9b" stroke-width="1.1" /><path d="M1 14.5 L5.5 10 L9.5 13.5 L15.5 9.5" fill="none" stroke="#3a5f9b" stroke-width="1.8" /><polygon points="16.6,11.6 16.6,16.6 11.6,16.6" fill="#111"/></g>
<g transform="translate(529.0,92.0)"><rect x="5.5" y="1" width="6" height="3" fill="#cf2037"/><rect x="1" y="4.2" width="5" height="3" fill="#bbb" stroke="#888" stroke-width="0.6"/><rect x="6.5" y="4.2" width="4" height="3" fill="#e66" stroke="#cf2037" stroke-width="0.6"/><rect x="11" y="4.2" width="5" height="3" fill="#bbb" stroke="#888" stroke-width="0.6"/><rect x="1" y="8" width="15" height="3.2" fill="#f2b01e"/><rect x="6" y="8.4" width="5" height="2.4" fill="#ccc"/><rect x="1" y="12" width="4" height="3.2" fill="#e66" stroke="#cf2037" stroke-width="0.6"/><rect x="6" y="12" width="5" height="3.2" fill="#fff" stroke="#cf2037" stroke-width="0.6"/><rect x="12" y="12" width="4" height="3.2" fill="#e66" stroke="#cf2037" stroke-width="0.6"/><polygon points="16.6,11.6 16.6,16.6 11.6,16.6" fill="#111"/></g>
<g transform="translate(565.0,64.0)"><rect x="1.5" y="1.5" width="8" height="10" fill="#d4d4d4" stroke="#888" stroke-width="1" /><rect x="6.5" y="5.5" width="8" height="10" fill="#b9ceec" stroke="#3a5f9b" stroke-width="1.1" /><polygon points="16.6,11.6 16.6,16.6 11.6,16.6" fill="#111"/></g>
<g transform="translate(589.0,64.0)"><rect x="1" y="1.5" width="4.2" height="14" fill="#d4d4d4" stroke="#555" stroke-width="1" stroke-dasharray="2 1.4"/><rect x="11.5" y="1.5" width="4" height="14" fill="#b9ceec" stroke="#3a5f9b" stroke-width="1.1" /><path d="M4 7.4 H7.5 V5.4 L11 8.7 L7.5 12 V10 H4 Z" fill="#cf2037"/><polygon points="16.6,11.6 16.6,16.6 11.6,16.6" fill="#111"/></g>
<g transform="translate(613.0,64.0)"><path d="M3 5 L6.5 1.5 H9.5 L13 5 M8 4.5 H11.5" fill="none" stroke="#8c8c8c" stroke-width="1" /><rect x="1.5" y="8" width="5" height="6.5" fill="#d4d4d4" stroke="#555" stroke-width="1" stroke-dasharray="1.6 1.2"/><rect x="11.5" y="8" width="4" height="6.5" fill="#b9ceec" stroke="#3a5f9b" stroke-width="1.1" /><path d="M3 10.4 H6.5 V8.6 L10 11.5 L6.5 14.4 V12.6 H3 Z" fill="#cf2037"/></g>
<g transform="translate(637.0,64.0)"><rect x="11.5" y="1.5" width="4" height="10" fill="#d4d4d4" stroke="#555" stroke-width="1" stroke-dasharray="2 1.4"/><rect x="1" y="12.5" width="14.5" height="3.5" fill="#b9ceec" stroke="#3a5f9b" stroke-width="1.1" /><path d="M9 2.5 C5 2.5 3.5 5 3 8" fill="none" stroke="#cf2037" stroke-width="1.7" /><polygon points="0.5,6 6,7 2.5,10.5" fill="#cf2037"/><polygon points="16.6,11.6 16.6,16.6 11.6,16.6" fill="#111"/></g>
<g transform="translate(661.0,64.0)"><path d="M8 1 V16" fill="none" stroke="#8c8c8c" stroke-width="1.1" /><path d="M5 3 V14 H1.5 Z" fill="#d4d4d4" stroke="#666" stroke-width="0.9" stroke-dasharray="1.4 1"/><path d="M10.5 3 V14 H14.5 Z" fill="#b9ceec" stroke="#3a5f9b" stroke-width="1.1" /><polygon points="16.6,11.6 16.6,16.6 11.6,16.6" fill="#111"/></g>
<g transform="translate(685.0,64.0)"><rect x="1.5" y="1.5" width="14" height="14" fill="#fff" stroke="#3a5f9b" stroke-width="1.1" /><path d="M2 8.5 H8 V15" fill="none" stroke="#3a5f9b" stroke-width="1" stroke-dasharray="1.6 1.3"/><path d="M9.5 7 L13.5 3" fill="none" stroke="#cf2037" stroke-width="1.5" /><polygon points="10.5,2.3 14.4,2.2 14.3,6.1" fill="#cf2037"/><polygon points="16.6,11.6 16.6,16.6 11.6,16.6" fill="#111"/></g>
<g transform="translate(709.0,64.0)"><text x="-0.5" y="15.8" font-size="19.5" font-weight="bold" fill="#ea4d5d" stroke="#cf2037" stroke-width="0.7" font-family="Liberation Sans, sans-serif" textLength="16" lengthAdjust="spacingAndGlyphs">X</text><polygon points="16.6,11.6 16.6,16.6 11.6,16.6" fill="#111"/></g>
<g transform="translate(565.0,92.0)"><path d="M3 5 L6.5 1.5 H9.5 L13 5 M8 4.5 H11.5" fill="none" stroke="#8c8c8c" stroke-width="1" /><rect x="1.5" y="6.5" width="8" height="6" fill="#d4d4d4" stroke="#888" stroke-width="1" /><rect x="6.5" y="10" width="8" height="5.5" fill="#b9ceec" stroke="#3a5f9b" stroke-width="1.1" /></g>
<g transform="translate(589.0,92.0)"><path d="M1 1.2 H16 M1 15 H16" fill="none" stroke="#3a5f9b" stroke-width="1.7" /><path d="M4.5 4 V12 M2.5 6 L4.5 3.6 L6.5 6 M2.5 10 L4.5 12.4 L6.5 10" fill="none" stroke="#3a5f9b" stroke-width="1" /><path d="M8.5 8 H13" fill="none" stroke="#cf2037" stroke-width="1.3" /><polygon points="12,5.6 15.5,8 12,10.4" fill="#cf2037"/><polygon points="16.6,11.6 16.6,16.6 11.6,16.6" fill="#111"/></g>
<g transform="translate(613.0,92.0)"><path d="M1.5 1 V16" fill="none" stroke="#8c8c8c" stroke-width="1.1" /><rect x="4" y="2" width="12" height="4.5" fill="#b9ceec" stroke="#3a5f9b" stroke-width="1.1" /><rect x="10" y="10" width="6" height="5" fill="#b9ceec" stroke="#3a5f9b" stroke-width="1.1" /><path d="M9 11.4 H6 V9.6 L2.8 12.5 L6 15.4 V13.6 H9 Z" fill="#cf2037"/><polygon points="16.6,11.6 16.6,16.6 11.6,16.6" fill="#111"/></g>
<g transform="translate(637.0,92.0)"><path d="M4 6.5 L7 3.5 H15.5 V12 L12.5 15.5 H4 Z" fill="#ececec" stroke="#777" stroke-width="1" /><path d="M4 6.5 H12.5 V15.5 M12.5 6.5 L15.5 3.5" fill="none" stroke="#8c8c8c" stroke-width="1" /><rect x="6" y="8.5" width="4.5" height="5" fill="#ddd" stroke="#999" stroke-width="0.8" /><path d="M6.5 1.8 C3.5 1.5 2 3.5 2 6" fill="none" stroke="#cf2037" stroke-width="1.6" /><polygon points="0,4.5 4.5,5 2,8" fill="#cf2037"/><polygon points="16.6,11.6 16.6,16.6 11.6,16.6" fill="#111"/></g>
<g transform="translate(661.0,92.0)"><path d="M3 5 L6.5 1.5 H9.5 L13 5 M8 4.5 H11.5" fill="none" stroke="#8c8c8c" stroke-width="1" /><path d="M8 4.5 V16" fill="none" stroke="#8c8c8c" stroke-width="1.1" /><path d="M5 8 V15 H1.5 Z" fill="#d4d4d4" stroke="#555" stroke-width="0.9" stroke-dasharray="1.4 1"/><path d="M10.5 8 V15 H14.5 Z" fill="#b9ceec" stroke="#3a5f9b" stroke-width="1.1" /><polygon points="16.6,11.6 16.6,16.6 11.6,16.6" fill="#111"/></g>
<g transform="translate(685.0,92.0)"><text x="7" y="10.5" font-size="13.5" fill="#3a5f9b" font-weight="bold" font-family="Liberation Sans, sans-serif" >A</text><text x="0" y="15.8" font-size="7.5" fill="#aaa" font-weight="bold" font-family="Liberation Sans, sans-serif" >A</text></g>
<g transform="translate(709.0,92.0)"><path d="M1.5 3 L5.5 7 M5.5 3 L1.5 7" fill="none" stroke="#cf2037" stroke-width="1.4" /><path d="M12.5 1 V5.5" fill="none" stroke="#3a5f9b" stroke-width="1.4" stroke-dasharray="1.5 1.2"/><path d="M1.5 14.5 L16 6.5" fill="none" stroke="#3a5f9b" stroke-width="1.8" /><path d="M12.5 9 V16 M9 11 L12 14.5" fill="none" stroke="#3a5f9b" stroke-width="1.5" /><polygon points="16.6,11.6 16.6,16.6 11.6,16.6" fill="#111"/></g>
<g transform="translate(745.0,66.0)"><rect x="0.5" y="6.5" width="15.5" height="6.5" fill="#dde8f8" stroke="#3a5f9b" stroke-width="1.1" /><path d="M3.5 6.5 v2.6 M6.5 6.5 v2 M9.5 6.5 v2.6 M12.5 6.5 v2" fill="none" stroke="#3a5f9b" stroke-width="0.9" /></g>
<g transform="translate(769.0,64.0)"><rect x="0.5" y="10" width="15.5" height="5.5" fill="#dde8f8" stroke="#3a5f9b" stroke-width="1.1" /><path d="M3.5 10 v2.6 M6.5 10 v2 M9.5 10 v2.6 M12.5 10 v2" fill="none" stroke="#3a5f9b" stroke-width="0.9" /><path d="M8 1.5 V6 M8 6 L3.5 8 M8 6 L12.5 8" fill="none" stroke="#8c8c8c" stroke-width="1.2" /><polygon points="6,3 8,0.5 10,3" fill="#8c8c8c"/></g>
<g transform="translate(745.0,92.0)"><rect x="0.5" y="9.5" width="15.5" height="6" fill="#dde8f8" stroke="#3a5f9b" stroke-width="1.1" /><path d="M3.5 9.5 v2.6 M6.5 9.5 v2 M9.5 9.5 v2.6 M12.5 9.5 v2" fill="none" stroke="#3a5f9b" stroke-width="0.9" /><path d="M1.5 4 H15" fill="none" stroke="#8c8c8c" stroke-width="1.2" /><polygon points="3.5,1.8 0.5,4 3.5,6.2" fill="#8c8c8c"/><polygon points="13,1.8 16,4 13,6.2" fill="#8c8c8c"/></g>
<g transform="translate(769.0,92.0)"><rect x="0.5" y="9.5" width="15.5" height="6" fill="#dde8f8" stroke="#3a5f9b" stroke-width="1.1" /><path d="M3.5 9.5 v2.6 M6.5 9.5 v2 M9.5 9.5 v2.6 M12.5 9.5 v2" fill="none" stroke="#3a5f9b" stroke-width="0.9" /><path d="M1.5 7 V3.5 L5 1 H14.5 V7 Z" fill="#9fb2d2" stroke="#3a5f9b" stroke-width="1" /><polygon points="16.6,11.6 16.6,16.6 11.6,16.6" fill="#111"/></g>
<g transform="translate(805.0,64.0)"><text x="-0.5" y="11.5" font-size="8.6" fill="#3a5f9b" font-weight="bold" font-family="Liberation Sans, sans-serif" >Abc</text><polygon points="16.6,11.6 16.6,16.6 11.6,16.6" fill="#111"/></g>
<g transform="translate(829.0,64.0)"><circle cx="4.5" cy="8.5" r="3" fill="none" stroke="#3a5f9b" stroke-width="1"/><path d="M0.5 8.5 H16 M4.5 1 V16" fill="none" stroke="#3a5f9b" stroke-width="1" /><text x="6.3" y="6.3" font-size="5.6" fill="#3a5f9b" font-weight="bold" font-family="Liberation Sans, sans-serif" >ABC</text><rect x="7.5" y="10.5" width="7" height="3.2" rx="1.5" fill="#cf2037"/></g>
<g transform="translate(853.0,64.0)"><rect x="1.5" y="1.5" width="11" height="14" fill="#ededed" stroke="#777" stroke-width="1.1" /><path d="M3.5 4.5 H8 M3.5 7 H8 M3.5 9.5 H8 M9.5 4.5 H11 M9.5 7 H11 M7 12.5 H11" fill="none" stroke="#666" stroke-width="1" /><polygon points="16.6,11.6 16.6,16.6 11.6,16.6" fill="#111"/></g>
<g transform="translate(877.0,64.0)"><rect x="2.5" y="9" width="3" height="4.5" fill="#dfe9f7" stroke="#3a5f9b" stroke-width="1" /><rect x="7" y="3" width="3" height="10.5" fill="#dfe9f7" stroke="#3a5f9b" stroke-width="1" /><rect x="11.5" y="1.5" width="3" height="12" fill="#dfe9f7" stroke="#3a5f9b" stroke-width="1" /><path d="M1 15.3 H16" fill="none" stroke="#3a5f9b" stroke-width="1.5" /><rect x="10" y="10.5" width="5" height="4.5" fill="#cf2037"/><polygon points="16.6,11.6 16.6,16.6 11.6,16.6" fill="#111"/></g>
<g transform="translate(805.0,92.0)"><text x="-0.3" y="11" font-size="9.6" fill="#3a5f9b" font-weight="bold" font-family="Liberation Sans, sans-serif" >123</text><path d="M0.5 14 H15.5" fill="none" stroke="#3a5f9b" stroke-width="1.7" /><polygon points="16.6,11.6 16.6,16.6 11.6,16.6" fill="#111"/></g>
<g transform="translate(853.0,92.0)"><path d="M2 6.5 L5.5 1.5 H14 L10.5 6.5 Z" fill="#b9ceec" stroke="#3a5f9b" stroke-width="1" /><path d="M2 15 L5.5 11 H9 V15 Z" fill="#b9ceec" stroke="#3a5f9b" stroke-width="1" /><path d="M2 6.5 V15" fill="none" stroke="#cf2037" stroke-width="0.9" stroke-dasharray="1 1"/><rect x="9.5" y="8" width="5.5" height="7.5" fill="#eee" stroke="#666" stroke-width="1" /><path d="M11 10.3 H13.5 M11 12.5 H13.5" fill="none" stroke="#666" stroke-width="0.9" /></g>
<g transform="translate(877.0,92.0)"><path d="M1 6.5 L5.5 2 H12 L8 6.5 Z" fill="#b9ceec" stroke="#3a5f9b" stroke-width="1" /><path d="M1 6.5 H8 V15.5 H1 Z" fill="#92a7c9" stroke="#3a5f9b" stroke-width="1" /><path d="M8 6.5 L12 2 V11 L8 15.5 Z" fill="#d5e0f2" stroke="#3a5f9b" stroke-width="1" /><path d="M4 8.5 L15 15.5" fill="none" stroke="#3a5f9b" stroke-width="1.8" /><path d="M13 3.5 C10.5 5 10.5 8 12 10" fill="none" stroke="#cf2037" stroke-width="1.3" /><polygon points="16.6,11.6 16.6,16.6 11.6,16.6" fill="#111"/></g>
<g transform="translate(913.0,64.0)"><g transform="rotate(38 8 8)"><path d="M1 5.5 L4.5 3 H14.5 V12 H4.5 L1 9.5 Z" fill="#b9ceec" stroke="#3a5f9b" stroke-width="1.1" /><circle cx="4.6" cy="7.5" r="1.2" fill="#fff" stroke="#3a5f9b" stroke-width="0.8"/></g><path d="M3.5 5.5 C1 3 3.5 0.5 5.5 2.5" fill="none" stroke="#3a5f9b" stroke-width="1" /><circle cx="13" cy="3.5" r="2" fill="#fff" stroke="#3a5f9b" stroke-width="1.1"/></g>
<g transform="translate(937.0,64.0)"><g transform="rotate(38 8 8)"><path d="M1 5.5 L4.5 3 H14.5 V12 H4.5 L1 9.5 Z" fill="#b9ceec" stroke="#3a5f9b" stroke-width="1.1" /><circle cx="4.6" cy="7.5" r="1.2" fill="#fff" stroke="#3a5f9b" stroke-width="0.8"/></g><path d="M3.5 5.5 C1 3 3.5 0.5 5.5 2.5" fill="none" stroke="#3a5f9b" stroke-width="1" /><g transform="translate(7.20,8.70) rotate(-46) scale(1)"><path d="M0 0 L3.4 -2 H12.5 V2 H3.4 Z" fill="#cf2037"/><path d="M3.4 -2 H12.5 V-0.7 H3.4 Z" fill="#e4707f"/><path d="M0 0 L3.4 -2 V2 Z" fill="#d8d2c4" stroke="#777" stroke-width="0.5"/><path d="M0 0 L1.4 -0.85 V0.85 Z" fill="#222"/></g></g>
<g transform="translate(913.0,92.0)"><g transform="rotate(38 8 8)"><path d="M1 5.5 L4.5 3 H14.5 V12 H4.5 L1 9.5 Z" fill="#b9ceec" stroke="#3a5f9b" stroke-width="1.1" /><circle cx="4.6" cy="7.5" r="1.2" fill="#fff" stroke="#3a5f9b" stroke-width="0.8"/></g><path d="M3.5 5.5 C1 3 3.5 0.5 5.5 2.5" fill="none" stroke="#3a5f9b" stroke-width="1" /><g transform="rotate(-38 10 5)"><rect x="9" y="0" width="2.6" height="4" fill="#999" stroke="#555" stroke-width="0.6"/><rect x="6.5" y="4" width="7.5" height="3.6" fill="#b9ceec" stroke="#3a5f9b" stroke-width="0.8"/></g></g>
<g transform="translate(937.0,92.0)"><g transform="rotate(38 8 8)"><path d="M1 5.5 L4.5 3 H14.5 V12 H4.5 L1 9.5 Z" fill="#b9ceec" stroke="#3a5f9b" stroke-width="1.1" /><circle cx="4.6" cy="7.5" r="1.2" fill="#fff" stroke="#3a5f9b" stroke-width="0.8"/></g><path d="M3.5 5.5 C1 3 3.5 0.5 5.5 2.5" fill="none" stroke="#3a5f9b" stroke-width="1" /><path d="M9 9.5 L15 15.5 M15 9.5 L9 15.5" fill="none" stroke="#cf2037" stroke-width="1.8" /></g>
<g transform="translate(973.0,64.0)"><path d="M1 1.5 H15 L9.5 8 V13.5 L6.5 15.5 V8 Z" fill="#b9ceec" stroke="#3a5f9b" stroke-width="1.1" /></g>
<g transform="translate(997.0,64.0)"><g transform="rotate(45 8 8)"><rect x="6.6" y="6.5" width="2.8" height="9" fill="#d8d8d8" stroke="#777" stroke-width="0.9" /><rect x="5.2" y="3.5" width="5.6" height="3" fill="#b9ceec" stroke="#3a5f9b" stroke-width="1" /><ellipse cx="8" cy="1.5" rx="2" ry="2.6" fill="#b9ceec" stroke="#3a5f9b" stroke-width="1"/></g><polygon points="16.6,11.6 16.6,16.6 11.6,16.6" fill="#111"/></g>
<g transform="translate(1021.0,64.0)"><path d="M1 1.5 H15 L9.5 8 V13.5 L6.5 15.5 V8 Z" fill="#b9ceec" stroke="#3a5f9b" stroke-width="1.1" /><path d="M9 16 V12.5 L12.5 9.5 L16 12.5 V16 Z" fill="#3a5f9b"/><polygon points="16.6,11.6 16.6,16.6 11.6,16.6" fill="#111"/></g>
<g transform="translate(1045.0,64.0)"><path d="M2.5 1.5 H13.5 L9.5 6.5 V12 H6.5 V6.5 Z" fill="#b9ceec" stroke="#3a5f9b" stroke-width="1.1" /><path d="M1 10 V15 H15.5 V10" fill="none" stroke="#3a5f9b" stroke-width="1.7" /><polygon points="16.6,11.6 16.6,16.6 11.6,16.6" fill="#111"/></g>
<g transform="translate(973.0,92.0)"><path d="M1 1.5 H15 L9.5 8 V13.5 H6.5 V8 Z" fill="#d0d0d0" stroke="#b4b4b4" stroke-width="1.1" /><polygon points="9,13.2 15.5,13.2 12.2,16.5" fill="#b4b4b4"/></g>
<g transform="translate(997.0,92.0)"><path d="M2 1.5 H14 L9.5 6.5 V9.5 H6.5 V6.5 Z" fill="#b9ceec" stroke="#3a5f9b" stroke-width="1.1" /><path d="M0.5 11.2 H16 M0.5 14.6 H16" fill="none" stroke="#3a5f9b" stroke-width="1.9" /><polygon points="16.6,11.6 16.6,16.6 11.6,16.6" fill="#111"/></g>
<g transform="translate(1021.0,92.0)"><path d="M2 1.5 H14 L9.5 6.5 V9.5 H6.5 V6.5 Z" fill="#b9ceec" stroke="#3a5f9b" stroke-width="1.1" /><rect x="2.5" y="5.5" width="6" height="6.5" fill="none" stroke="#3a5f9b" stroke-width="0.9" /><rect x="8.5" y="9.5" width="6" height="5" fill="#fff" stroke="#3a5f9b" stroke-width="0.9" /><rect x="0.5" y="14" width="1.6" height="1.6" fill="#3a5f9b"/><path d="M14.5 2 V6" fill="none" stroke="#3a5f9b" stroke-width="0.9" stroke-dasharray="1 1"/><polygon points="16.6,11.6 16.6,16.6 11.6,16.6" fill="#111"/></g>
<g transform="translate(1045.0,92.0)"><rect x="7" y="5.5" width="8.5" height="9" fill="#b9ceec" stroke="#3a5f9b" stroke-width="1.1" /><circle cx="7.5" cy="5.5" r="3.6" fill="#e9eef7" stroke="#7f97bf" stroke-width="1.3"/><path d="M5 8.5 L1.5 12.5" fill="none" stroke="#7f97bf" stroke-width="2.2" /></g>
<rect x="1101.6" y="60.6" width="22.4" height="22" rx="2.5" fill="#dfe8f5" stroke="#6f8fbf" stroke-width="1"/>
<rect x="1077.6" y="88.6" width="22.8" height="22" rx="2.5" fill="#dfe8f5" stroke="#6f8fbf" stroke-width="1"/>
<g transform="translate(1081.0,64.0)"><path d="M1.5 1.5 H4 V12.5 H15.5 V15.5 H1.5 Z" fill="#b9ceec" stroke="#3a5f9b" stroke-width="1.1" /><path d="M2 4 h1.2 M2 6.5 h1.2 M2 9 h1.2 M6.5 14.8 v-1.2 M9 14.8 v-1.2 M11.5 14.8 v-1.2" fill="none" stroke="#3a5f9b" stroke-width="0.8" /><path d="M7 5.5 C8 2.5 11.5 2.5 13 5 M14 8 C12.5 10.5 9.5 10.5 8 8.5" fill="none" stroke="#8c8c8c" stroke-width="1.4" /><polygon points="12,6.5 15.2,6 14,3.2" fill="#8c8c8c"/><polygon points="9.2,7.3 6.2,7.6 7.2,10.6" fill="#8c8c8c"/><polygon points="16.6,11.6 16.6,16.6 11.6,16.6" fill="#111"/></g>
<g transform="translate(1105.0,64.0)"><rect x="1" y="1.5" width="14.5" height="13.5" fill="#b5f0b0"/><polygon points="1,1.5 15.5,1.5 15.5,15" fill="#c8c8f4"/><polygon points="1,4 12.5,15 9,15 1,7.5" fill="#b5f0b0"/><rect x="1" y="1.5" width="14.5" height="13.5" fill="none" stroke="#333" stroke-width="1" stroke-dasharray="2.4 1.6"/><path d="M9 3 L13 7 M3.8 9.6 L8 13.6" fill="none" stroke="#111" stroke-width="1.5" /><polygon points="14.2,3.8 14.2,8.2 9.8,8.2" fill="#111"/><polygon points="2.6,13 2.6,8.4 7.2,8.4" fill="#111"/><polygon points="16.6,11.6 16.6,16.6 11.6,16.6" fill="#111"/></g>
<g transform="translate(1129.0,64.0)"><path d="M3 2 H15 V15 H1 V10" fill="#b9ceec" stroke="#3a5f9b" stroke-width="1.1" /><path d="M2 8.5 C3 5.5 6 4.5 8.5 6 M3.5 10.5 C4.5 8.5 7 8 8.5 9" fill="none" stroke="#3a5f9b" stroke-width="1.5" /><polygon points="7,3.8 10.5,6.8 6.5,8" fill="#3a5f9b"/></g>
<g transform="translate(1081.0,92.0)"><path d="M8 9.5 V3.5" fill="none" stroke="#3a5f9b" stroke-width="2.2" /><polygon points="4.6,5 8,0.8 11.4,5" fill="#3a5f9b"/><path d="M8 9.5 L3 13.5" fill="none" stroke="#1d9447" stroke-width="2.4" /><polygon points="0.3,16 1,10.8 5.8,14.8" fill="#1d9447"/><path d="M8 9.5 L13 13.5" fill="none" stroke="#e02030" stroke-width="2.4" /><polygon points="15.7,16 15,10.8 10.2,14.8" fill="#e02030"/><polygon points="16.6,11.6 16.6,16.6 11.6,16.6" fill="#111"/></g>
<g transform="translate(1105.0,92.0)"><path d="M1 1.2 H16" fill="none" stroke="#8c8c8c" stroke-width="1" /><path d="M1 3.2 H16" fill="none" stroke="#bbb" stroke-width="0.8" /><path d="M4 3.5 L12.5 7.5 L9.5 9 L13 13.5 L11 15 L7.5 10.5 L5.5 13 Z" fill="#b9ceec" stroke="#3a5f9b" stroke-width="1.1" /><polygon points="16.6,11.6 16.6,16.6 11.6,16.6" fill="#111"/></g>
<g transform="translate(1129.0,92.0)"><text x="0.3" y="16" font-size="20" font-weight="bold" fill="#a9a9a9" stroke="#a9a9a9" stroke-width="1.3" stroke-linejoin="round" font-family="Liberation Sans, DejaVu Sans, sans-serif" textLength="15.4" lengthAdjust="spacingAndGlyphs">Σ</text></g>
<g transform="translate(142.0,8.0)"><path d="M1 7 L5.5 1.5 H15.5 V10 L11 15.5 H1 Z" fill="#c2d2ea" stroke="#3a5f9b" stroke-width="1.2" /><path d="M1 7 H11 V15.5 M11 7 L15.5 1.5 M6 7 V15.5 M1 11 H11 M8.2 4.2 V1.5" fill="none" stroke="#3a5f9b" stroke-width="1" /></g>
<g transform="translate(163.0,8.0)"><rect x="0.5" y="0.8" width="15" height="14.4" fill="#fff" stroke="#777" stroke-width="1.1" /><path d="M3 4 V12 M3 5.5 H5 M3 10.5 H5" fill="none" stroke="#555" stroke-width="1" /><rect x="6.5" y="4" width="2.4" height="3" fill="#333"/><rect x="9.7" y="4" width="2.4" height="3" fill="#eab200"/><rect x="12.6" y="4" width="2" height="3" fill="#a01818"/><rect x="6.5" y="9" width="2.4" height="3" fill="#333"/><rect x="9.7" y="9" width="2.4" height="3" fill="#555"/><rect x="12.6" y="9" width="2" height="3" fill="#333"/></g>
<g transform="translate(184.5,8.0)"><path d="M1 1 H15 V15 H3 L1 13 Z" fill="#7f9acb" stroke="#3a5f9b" stroke-width="1.1" /><rect x="3.5" y="1.5" width="9" height="5.5" fill="#e8eef8"/><rect x="4" y="9.5" width="8" height="5" fill="#fff"/><rect x="6.5" y="10.5" width="2.4" height="3.4" fill="#333"/><path d="M4.5 3.5 H11.5" fill="none" stroke="#9ab" stroke-width="0.8" /></g>
<g transform="translate(205.5,8.0)"><rect x="1" y="1.2" width="11" height="14" fill="#eee" stroke="#777" stroke-width="1.1" /><g transform="rotate(40 11 6)"><rect x="9.4" y="-1" width="3.2" height="8" fill="#4f78b8" stroke="#3a5f9b" stroke-width="0.7"/><polygon points="9.4,7 12.6,7 11,10" fill="#333"/></g></g>
<polygon points="226,16.3 232,16.3 229,19.6" fill="#4d4d4d"/>
<g transform="translate(237.0,8.0)"><rect x="0.5" y="1" width="15" height="10.5" fill="#eaeaea" stroke="#777" stroke-width="1.1" /><circle cx="8.5" cy="8.5" r="3.4" fill="#fff" stroke="#6a86b4" stroke-width="1.4"/><path d="M6 11 L2.5 14.5" fill="none" stroke="#6a86b4" stroke-width="2" /><path d="M12 9 H15" fill="none" stroke="#555" stroke-width="1" /></g>
<g transform="translate(259.0,8.0)"><path d="M1 7 L8 1.5 V5 C12 5 14.5 8 15 14.5 C13 10.5 11 9.5 8 9.5 V12.5 Z" fill="#c7d5ea" stroke="#aebfda" stroke-width="1"/></g>
<polygon points="279.3,16.3 285.3,16.3 282.3,19.6" fill="#4d4d4d"/>
<g transform="translate(291.0,8.0)"><path d="M15 7 L8 1.5 V5 C4 5 1.5 8 1 14.5 C3 10.5 5 9.5 8 9.5 V12.5 Z" fill="#c7d5ea" stroke="#aebfda" stroke-width="1"/></g>
<polygon points="311,16.3 317,16.3 314,19.6" fill="#4d4d4d"/>
<g transform="translate(323.0,8.0)"><path d="M7 2.5 H2 V12.5 H6 M9 13.5 H14.5 V3 H11" fill="none" stroke="#2f5597" stroke-width="2" /><polygon points="6.5,0 10.5,2.7 6.5,5.4" fill="#2f5597"/><polygon points="9.5,10.8 5.5,13.5 9.5,16.2" fill="#2f5597"/></g>
<polygon points="343,16.3 349,16.3 346,19.6" fill="#4d4d4d"/>
<g transform="translate(355.0,8.0)"><rect x="0.6" y="0.8" width="15" height="14.6" fill="#fff" stroke="#2f5597" stroke-width="1.1" stroke-dasharray="4 1.5"/><path d="M3 8 C5.5 4.5 10.5 4.5 13 8 C10.5 10.5 5.5 10.5 3 8 Z" fill="#6d8fc6"/><circle cx="8" cy="7.6" r="1.7" fill="#2f5597"/></g>
<polygon points="375,16.3 381,16.3 378,19.6" fill="#4d4d4d"/>
<g transform="translate(387.0,8.0)"><rect x="0.6" y="0.8" width="15" height="14.6" fill="#fff" stroke="#777" stroke-width="1.2"/><rect x="1.2" y="1.4" width="6.3" height="6.6" fill="#cfdaf0"/><path d="M8 1 V15 M1 8 H8" fill="none" stroke="#777" stroke-width="1" /><text x="9" y="13.8" font-size="8.5" fill="#444" font-weight="bold" font-family="Liberation Sans, sans-serif" >2</text></g>
<polygon points="407,16.3 413,16.3 410,19.6" fill="#4d4d4d"/>
<g transform="translate(419.0,8.0)"><path d="M2.5 14 L11 5" fill="none" stroke="#777" stroke-width="2.6" /><circle cx="12" cy="4" r="3" fill="#777"/><circle cx="13.4" cy="2.6" r="1.6" fill="#b9d0ea"/><path d="M3 3 L13.5 14" fill="none" stroke="#777" stroke-width="2.4" /><path d="M9.5 6.5 L14 1.5" fill="none" stroke="#3f73c4" stroke-width="2.6" /><circle cx="3" cy="3" r="2.2" fill="#777"/></g>
<polygon points="439,16.3 445,16.3 442,19.6" fill="#4d4d4d"/>
<path d="M462.8 11.6 H469.2" stroke="#555" stroke-width="1.4"/><polygon points="462.6,14 469.4,14 466,17.4" fill="#555"/>
<g fill="#3e67a5"><circle cx="1687" cy="10.3" r="3.5"/><path d="M1679 23 C1679 17.5 1682 14.5 1687 14.5 C1692 14.5 1695 17.5 1695 23 Z"/></g>
<g><rect x="1779" y="7" width="14" height="3.8" fill="#3e67a5"/><rect x="1779" y="12" width="14" height="3.8" fill="#3e67a5"/><rect x="1779" y="17" width="14" height="3.8" fill="#3e67a5"/><rect x="1780.6" y="8" width="3.6" height="1.6" fill="#2fae3d"/><rect x="1780.6" y="13" width="3.6" height="1.6" fill="#f1b81c"/><rect x="1780.6" y="18" width="3.6" height="1.6" fill="#c2185b"/></g>
<g><path d="M1799.5 8.5 H1802 L1803.2 11" stroke="#3e67a5" stroke-width="1.4" fill="none"/><path d="M1802 10 H1814.5 L1813 17 H1803.5 Z" fill="#3e67a5"/><rect x="1803.4" y="17.6" width="3.2" height="3.2" fill="#888"/><rect x="1809.4" y="17.6" width="3.2" height="3.2" fill="#888"/></g>
<circle cx="1829" cy="13.5" r="6.6" fill="#fff" stroke="#3a5f9b" stroke-width="1.2"/>
<text x="1825.7" y="18" font-size="12" fill="#3a5f9b" font-weight="bold" font-family="Liberation Sans, sans-serif" >?</text>
<polygon points="1841,14.3 1847,14.3 1844,17.4" fill="#4d4d4d"/>
<rect x="1857" y="16" width="9" height="3" fill="#3d3d3d"/>
<rect x="1880" y="13" width="8.4" height="6" fill="none" stroke="#3d3d3d" stroke-width="1.8"/><rect x="1879.1" y="12" width="10.2" height="2.6" fill="#3d3d3d"/>
<path d="M1901.5 11 L1911 19.8 M1911 11 L1901.5 19.8" stroke="#3d3d3d" stroke-width="2.8" fill="none"/>
<g transform="translate(1871,43.5)"><circle r="5" fill="none" stroke="#4f78b8" stroke-width="2.2" stroke-dasharray="2.3 1.63"/><circle r="4.2" fill="#dbe6f6" stroke="#4f78b8" stroke-width="1.1"/><circle r="1.7" fill="#fff" stroke="#4f78b8" stroke-width="1"/></g>
<g><circle cx="1901.5" cy="40.5" r="4.6" fill="#fff" stroke="#5a7db5" stroke-width="1.3"/><path d="M1898.3 44 L1893.5 49" stroke="#5a7db5" stroke-width="2.6" stroke-linecap="round"/></g></svg>
<svg width="1920" height="1080" viewBox="0 0 1920 1080" id="plan">
<defs>
<pattern id="ctile" width="128" height="114" patternUnits="userSpaceOnUse" patternTransform="translate(55 40)">
<rect width="128" height="114" fill="#adadad"/>
<rect x="0" y="0" width="128" height="9" fill="#b3b3b3"/>
<rect x="0" y="24" width="128" height="5" fill="#a9a9a9"/>
<rect x="0" y="52" width="128" height="8" fill="#a8a8a8"/>
<rect x="0" y="60" width="128" height="10" fill="#b1b1b1"/>
<rect x="0" y="96" width="128" height="6" fill="#aaaaaa"/>
<rect x="10" y="10" width="34" height="40" fill="#b2b2b2"/>
<rect x="62" y="66" width="40" height="34" fill="#a8a8a8"/>
<rect x="84" y="12" width="30" height="30" fill="#b0b0b0"/>
<rect x="20" y="74" width="26" height="30" fill="#b1b1b1"/>
<circle cx="64" cy="56" r="1.1" fill="#909090"/><circle cx="0" cy="56" r="1" fill="#969696"/><circle cx="128" cy="56" r="1" fill="#969696"/>
</pattern>
<filter id="conc" x="0" y="0" width="100%" height="100%" color-interpolation-filters="sRGB">
<feGaussianBlur in="SourceGraphic" stdDeviation="2.2" result="b"/>
<feTurbulence type="fractalNoise" baseFrequency="0.03 0.11" numOctaves="3" seed="7" result="n1"/>
<feTurbulence type="fractalNoise" baseFrequency="0.09 0.03" numOctaves="2" seed="23" result="n2"/>
<feComposite in="n1" in2="n2" operator="arithmetic" k1="0" k2="0.6" k3="0.4" k4="0" result="n"/>
<feColorMatrix in="n" type="matrix" values="1 0 0 0 0  1 0 0 0 0  1 0 0 0 0  0 0 0 0 1" result="g"/>
<feComposite in="b" in2="g" operator="arithmetic" k1="0" k2="1" k3="0.16" k4="-0.08" result="m"/>
<feComposite in="m" in2="SourceGraphic" operator="in"/>
</filter>
</defs>
<path d="M165 187 A1392.5 1392.5 0 0 1 867.5 449.5 L867.5 832.5 L833.3 832.5 L833.3 971 L424.5 971 L424.5 642.5 L119.5 642.5 Z" fill="#adadad"/>
<path d="M165 187 A1392.5 1392.5 0 0 1 867.5 449.5 L867.5 832.5 L833.3 832.5 L833.3 971 L424.5 971 L424.5 642.5 L119.5 642.5 Z" fill="url(#ctile)" filter="url(#conc)"/>
<path d="M213.75 192.00 C213.10 194.29 211.11 201.15 209.83 205.74 C208.54 210.32 207.28 214.91 206.05 219.51 C204.81 224.11 203.59 228.71 202.40 233.32 C201.20 237.93 200.03 242.54 198.88 247.16 C197.73 251.78 196.60 256.41 195.48 261.04 C194.37 265.67 193.28 270.30 192.20 274.94 C191.13 279.58 190.07 284.22 189.03 288.87 C187.99 293.52 186.97 298.17 185.96 302.83 C184.95 307.49 183.96 312.15 182.99 316.82 C182.01 321.48 181.05 326.15 180.11 330.83 C179.16 335.50 178.23 340.18 177.31 344.86 C176.40 349.54 175.50 354.23 174.61 358.92 C173.72 363.60 172.85 368.30 171.99 372.99 C171.13 377.69 170.28 382.38 169.45 387.08 C168.61 391.79 167.79 396.49 166.99 401.20 C166.18 405.90 165.38 410.61 164.60 415.32 C163.82 420.03 163.05 424.75 162.29 429.46 C161.54 434.18 160.79 438.90 160.05 443.62 C159.32 448.34 158.59 453.06 157.88 457.78 C157.16 462.50 156.46 467.23 155.76 471.96 C155.07 476.68 154.38 481.41 153.70 486.14 C153.02 490.87 152.35 495.60 151.68 500.33 C151.01 505.06 150.36 509.79 149.70 514.53 C149.05 519.26 148.40 523.99 147.76 528.73 C147.12 533.46 146.48 538.19 145.85 542.93 C145.21 547.66 144.59 552.40 143.96 557.13 C143.33 561.87 142.71 566.60 142.09 571.34 C141.47 576.07 140.85 580.80 140.23 585.54 C139.61 590.27 138.99 595.00 138.38 599.74 C137.76 604.47 137.14 609.20 136.53 613.93 C135.91 618.66 135.29 623.39 134.67 628.12 C134.05 632.85 133.11 639.94 132.80 642.30" fill="none" stroke="#ee8e2c" stroke-width="1.35"/>
<path d="M447.50 241.00 C445.33 242.15 438.74 245.50 434.48 247.88 C430.22 250.27 426.04 252.74 421.94 255.29 C417.84 257.84 413.81 260.47 409.86 263.19 C405.91 265.90 402.03 268.69 398.23 271.56 C394.42 274.42 390.69 277.37 387.03 280.38 C383.36 283.40 379.77 286.49 376.24 289.64 C372.71 292.80 369.25 296.03 365.85 299.31 C362.46 302.60 359.12 305.96 355.85 309.38 C352.58 312.79 349.37 316.27 346.22 319.81 C343.07 323.34 339.98 326.94 336.95 330.59 C333.92 334.24 330.95 337.94 328.03 341.70 C325.12 345.45 322.27 349.26 319.47 353.11 C316.67 356.96 313.93 360.87 311.24 364.81 C308.56 368.76 305.93 372.75 303.36 376.78 C300.78 380.81 298.26 384.88 295.80 388.99 C293.33 393.10 290.93 397.24 288.57 401.42 C286.21 405.60 283.91 409.81 281.66 414.06 C279.40 418.30 277.21 422.57 275.05 426.87 C272.89 431.17 270.79 435.51 268.72 439.86 C266.66 444.21 264.64 448.59 262.66 452.99 C260.68 457.39 258.74 461.81 256.84 466.25 C254.94 470.69 253.07 475.15 251.24 479.62 C249.41 484.10 247.61 488.59 245.84 493.09 C244.07 497.59 242.33 502.11 240.62 506.63 C238.90 511.16 237.22 515.69 235.56 520.23 C233.89 524.77 232.25 529.32 230.63 533.87 C229.01 538.42 227.41 542.98 225.83 547.54 C224.24 552.09 222.67 556.65 221.12 561.20 C219.56 565.76 218.02 570.31 216.48 574.86 C214.95 579.40 213.43 583.95 211.91 588.48 C210.39 593.01 208.88 597.54 207.37 602.05 C205.86 606.57 204.35 611.07 202.84 615.56 C201.33 620.05 199.82 624.52 198.31 628.98 C196.79 633.44 194.51 640.08 193.75 642.30" fill="none" stroke="#ee8e2c" stroke-width="1.35"/>
<path d="M671.00 329.50 C668.62 329.30 661.49 328.63 656.71 328.30 C651.94 327.97 647.15 327.70 642.35 327.51 C637.56 327.33 632.75 327.21 627.94 327.17 C623.14 327.13 618.32 327.16 613.52 327.27 C608.71 327.38 603.90 327.57 599.10 327.84 C594.30 328.12 589.50 328.47 584.72 328.90 C579.93 329.34 575.16 329.86 570.40 330.47 C565.64 331.08 560.90 331.77 556.17 332.55 C551.45 333.34 546.74 334.21 542.06 335.18 C537.38 336.14 532.73 337.20 528.10 338.35 C523.47 339.51 518.87 340.75 514.31 342.10 C509.75 343.45 505.21 344.89 500.72 346.44 C496.23 347.99 491.77 349.63 487.36 351.39 C482.95 353.14 478.57 354.99 474.25 356.95 C469.93 358.92 465.65 360.98 461.43 363.16 C457.20 365.34 453.03 367.63 448.91 370.03 C444.80 372.43 440.73 374.94 436.73 377.57 C432.74 380.19 428.79 382.93 424.92 385.80 C421.05 388.66 417.24 391.64 413.50 394.74 C409.76 397.84 404.33 402.79 402.50 404.40 L402.50 404.40 C400.87 406.12 395.90 411.24 392.71 414.72 C389.51 418.20 386.39 421.73 383.32 425.30 C380.25 428.87 377.26 432.49 374.31 436.14 C371.37 439.79 368.49 443.48 365.66 447.20 C362.83 450.93 360.06 454.69 357.34 458.49 C354.62 462.28 351.95 466.11 349.32 469.97 C346.70 473.83 344.12 477.72 341.59 481.63 C339.05 485.55 336.57 489.49 334.11 493.46 C331.66 497.43 329.25 501.43 326.87 505.44 C324.49 509.46 322.14 513.50 319.83 517.55 C317.51 521.61 315.23 525.69 312.97 529.78 C310.71 533.87 308.48 537.98 306.27 542.11 C304.06 546.23 301.88 550.37 299.71 554.52 C297.54 558.66 295.39 562.83 293.25 566.99 C291.11 571.16 288.99 575.34 286.88 579.52 C284.76 583.70 282.66 587.89 280.56 592.08 C278.46 596.26 276.38 600.46 274.28 604.65 C272.19 608.84 270.11 613.03 268.01 617.22 C265.92 621.41 263.83 625.60 261.73 629.78 C259.62 633.96 256.45 640.21 255.40 642.30" fill="none" stroke="#ee8e2c" stroke-width="1.35"/>
<path d="M867.50 454.60 C865.25 454.17 858.51 452.90 854.00 452.01 C849.49 451.11 844.96 450.19 840.42 449.24 C835.89 448.30 831.34 447.33 826.78 446.34 C822.22 445.36 817.65 444.36 813.07 443.35 C808.49 442.35 803.91 441.32 799.31 440.30 C794.71 439.29 790.11 438.26 785.50 437.24 C780.89 436.22 776.27 435.21 771.64 434.20 C767.02 433.20 762.39 432.20 757.75 431.22 C753.12 430.25 748.47 429.28 743.83 428.35 C739.18 427.41 734.54 426.50 729.88 425.61 C725.23 424.73 720.58 423.87 715.92 423.06 C711.27 422.24 706.61 421.46 701.95 420.72 C697.29 419.98 692.63 419.29 687.98 418.64 C683.32 418.00 678.66 417.40 674.00 416.86 C669.35 416.32 664.69 415.83 660.04 415.41 C655.39 414.99 650.74 414.63 646.09 414.34 C641.45 414.05 636.81 413.83 632.17 413.69 C627.53 413.54 622.90 413.47 618.27 413.48 C613.65 413.50 609.03 413.59 604.41 413.77 C599.80 413.96 595.19 414.22 590.60 414.59 C586.00 414.96 581.41 415.42 576.83 415.98 C572.25 416.55 567.67 417.21 563.11 417.98 C558.55 418.76 554.00 419.63 549.46 420.63 C544.92 421.63 540.39 422.74 535.88 423.97 C531.36 425.20 526.86 426.55 522.37 428.03 C517.88 429.52 513.40 431.12 508.94 432.86 C504.48 434.61 497.82 437.56 495.60 438.50 L495.60 438.50 C493.52 439.75 487.18 443.42 483.10 446.01 C479.01 448.61 475.01 451.31 471.09 454.09 C467.16 456.87 463.32 459.74 459.54 462.69 C455.77 465.64 452.07 468.67 448.44 471.78 C444.80 474.88 441.24 478.07 437.75 481.32 C434.25 484.57 430.82 487.89 427.44 491.27 C424.07 494.66 420.76 498.11 417.50 501.61 C414.24 505.12 411.05 508.68 407.90 512.29 C404.75 515.91 401.65 519.58 398.60 523.29 C395.55 527.00 392.55 530.76 389.59 534.55 C386.64 538.35 383.72 542.19 380.85 546.05 C377.97 549.92 375.13 553.83 372.33 557.76 C369.53 561.69 366.76 565.65 364.02 569.63 C361.28 573.60 358.58 577.61 355.90 581.62 C353.22 585.64 350.56 589.67 347.93 593.72 C345.29 597.76 342.69 601.81 340.09 605.86 C337.49 609.92 334.92 613.98 332.36 618.04 C329.79 622.09 327.24 626.15 324.70 630.19 C322.16 634.24 318.37 640.28 317.10 642.30" fill="none" stroke="#ee8e2c" stroke-width="1.35"/>
<path d="M867.50 565.75 C865.35 564.76 858.93 561.81 854.61 559.84 C850.30 557.87 845.97 555.90 841.62 553.94 C837.27 551.98 832.90 550.02 828.51 548.08 C824.13 546.14 819.72 544.20 815.30 542.30 C810.89 540.39 806.45 538.50 802.00 536.64 C797.54 534.77 793.07 532.93 788.59 531.13 C784.11 529.33 779.61 527.55 775.09 525.82 C770.58 524.08 766.04 522.38 761.50 520.73 C756.96 519.08 752.40 517.47 747.82 515.92 C743.25 514.36 738.66 512.85 734.06 511.40 C729.46 509.96 724.85 508.56 720.22 507.23 C715.59 505.91 710.95 504.64 706.30 503.44 C701.65 502.25 696.98 501.12 692.31 500.07 C687.63 499.02 682.94 498.04 678.24 497.14 C673.54 496.25 668.83 495.43 664.11 494.71 C659.39 493.99 654.66 493.35 649.92 492.81 C645.17 492.27 640.42 491.81 635.66 491.47 C630.90 491.12 626.13 490.87 621.35 490.73 C616.57 490.59 611.78 490.55 606.98 490.63 C602.18 490.71 597.38 490.90 592.56 491.21 C587.75 491.52 580.51 492.28 578.10 492.50 L578.10 492.50 C575.88 493.30 569.21 495.62 564.80 497.27 C560.39 498.93 555.99 500.65 551.61 502.43 C547.24 504.22 542.89 506.06 538.57 507.98 C534.25 509.90 529.96 511.88 525.70 513.92 C521.45 515.97 517.22 518.09 513.03 520.27 C508.85 522.46 504.69 524.71 500.59 527.03 C496.48 529.35 492.41 531.74 488.40 534.20 C484.38 536.66 480.41 539.19 476.49 541.79 C472.57 544.40 468.70 547.07 464.89 549.82 C461.08 552.56 457.32 555.38 453.63 558.27 C449.93 561.16 446.30 564.13 442.73 567.17 C439.16 570.21 435.66 573.32 432.23 576.51 C428.80 579.70 425.43 582.96 422.14 586.31 C418.86 589.65 415.64 593.06 412.51 596.56 C409.38 600.06 406.32 603.63 403.35 607.28 C400.38 610.93 397.49 614.66 394.69 618.47 C391.89 622.29 389.18 626.17 386.57 630.15 C383.95 634.12 380.26 640.27 379.00 642.30" fill="none" stroke="#ee8e2c" stroke-width="1.35"/>
<path d="M867.50 677.50 C865.46 676.38 859.33 673.05 855.26 670.76 C851.20 668.48 847.15 666.14 843.11 663.79 C839.08 661.44 835.05 659.04 831.03 656.64 C827.01 654.23 823.00 651.80 818.98 649.37 C814.97 646.94 810.96 644.49 806.95 642.05 C802.94 639.61 798.93 637.16 794.91 634.73 C790.89 632.31 786.86 629.88 782.83 627.49 C778.79 625.09 774.75 622.71 770.69 620.37 C766.63 618.03 762.56 615.72 758.47 613.45 C754.38 611.19 750.27 608.95 746.14 606.78 C742.00 604.61 737.85 602.49 733.67 600.43 C729.49 598.38 725.29 596.38 721.05 594.46 C716.81 592.54 712.55 590.68 708.24 588.92 C703.94 587.16 699.60 585.47 695.23 583.89 C690.85 582.31 686.44 580.81 681.98 579.42 C677.52 578.03 673.03 576.74 668.48 575.57 C663.93 574.41 659.34 573.34 654.69 572.41 C650.05 571.48 642.95 570.40 640.60 570.00 L640.60 570.00 C638.31 570.28 631.47 571.09 626.84 571.69 C622.21 572.29 617.53 572.92 612.84 573.61 C608.14 574.29 603.41 575.02 598.67 575.80 C593.93 576.59 589.16 577.43 584.41 578.33 C579.65 579.24 574.88 580.20 570.13 581.25 C565.38 582.29 560.63 583.40 555.91 584.60 C551.19 585.80 546.49 587.07 541.82 588.44 C537.16 589.81 532.52 591.26 527.94 592.81 C523.36 594.37 518.81 596.02 514.34 597.78 C509.86 599.54 505.43 601.41 501.09 603.39 C496.74 605.38 492.46 607.47 488.27 609.70 C484.08 611.92 479.96 614.26 475.95 616.75 C471.94 619.23 468.01 621.84 464.21 624.59 C460.40 627.35 456.69 630.24 453.12 633.29 C449.54 636.34 446.08 639.53 442.75 642.89 C439.43 646.25 436.23 649.76 433.19 653.44 C430.15 657.13 425.95 663.07 424.50 665.00" fill="none" stroke="#ee8e2c" stroke-width="1.35"/>
<path d="M867.50 788.75 C865.06 788.15 857.60 786.57 852.86 785.14 C848.13 783.71 843.56 782.03 839.09 780.17 C834.62 778.32 830.30 776.23 826.06 774.01 C821.82 771.78 817.71 769.36 813.67 766.82 C809.63 764.28 805.70 761.58 801.81 758.79 C797.93 755.99 794.14 753.06 790.38 750.07 C786.62 747.08 782.92 743.98 779.25 740.85 C775.57 737.72 771.95 734.51 768.32 731.29 C764.70 728.08 761.10 724.81 757.49 721.58 C753.87 718.34 750.27 715.07 746.63 711.87 C743.00 708.66 739.35 705.45 735.65 702.34 C731.95 699.22 728.23 696.13 724.44 693.16 C720.64 690.19 716.80 687.27 712.87 684.50 C708.94 681.74 704.95 679.05 700.85 676.55 C696.75 674.04 692.57 671.64 688.26 669.45 C683.95 667.26 677.21 664.41 675.00 663.40 L675.00 663.40 C672.58 663.28 665.33 662.86 660.46 662.71 C655.60 662.56 650.71 662.48 645.82 662.48 C640.93 662.49 636.03 662.57 631.12 662.75 C626.22 662.93 621.31 663.18 616.40 663.54 C611.50 663.89 606.60 664.33 601.72 664.87 C596.83 665.41 591.95 666.05 587.10 666.78 C582.25 667.52 577.41 668.35 572.61 669.29 C567.81 670.23 563.02 671.27 558.28 672.43 C553.54 673.58 548.83 674.84 544.16 676.22 C539.50 677.60 534.87 679.08 530.30 680.69 C525.73 682.30 521.20 684.02 516.74 685.87 C512.28 687.72 507.86 689.69 503.52 691.79 C499.19 693.88 494.90 696.11 490.70 698.46 C486.50 700.82 482.36 703.30 478.31 705.93 C474.26 708.55 470.29 711.30 466.41 714.20 C462.53 717.10 458.72 720.14 455.03 723.32 C451.33 726.51 447.72 729.83 444.22 733.31 C440.72 736.79 437.31 740.41 434.03 744.20 C430.74 747.98 426.09 754.03 424.50 756.00" fill="none" stroke="#ee8e2c" stroke-width="1.35"/>
<path d="M833.30 865.50 C831.03 864.64 824.10 862.23 819.66 860.36 C815.21 858.48 810.88 856.44 806.63 854.28 C802.37 852.11 798.22 849.80 794.12 847.39 C790.03 844.98 786.02 842.44 782.06 839.82 C778.10 837.21 774.22 834.48 770.36 831.71 C766.51 828.93 762.71 826.07 758.93 823.17 C755.16 820.28 751.42 817.32 747.70 814.35 C743.97 811.38 740.27 808.36 736.56 805.36 C732.85 802.36 729.16 799.33 725.45 796.34 C721.73 793.35 718.02 790.35 714.27 787.41 C710.52 784.47 706.76 781.55 702.94 778.71 C699.13 775.87 695.29 773.07 691.38 770.36 C687.47 767.66 681.48 763.81 679.50 762.50 L679.50 762.50 C677.06 762.36 669.72 761.83 664.84 761.67 C659.97 761.50 655.11 761.46 650.27 761.53 C645.43 761.60 640.61 761.79 635.80 762.08 C630.99 762.37 626.20 762.78 621.42 763.29 C616.65 763.80 611.90 764.42 607.16 765.13 C602.43 765.85 597.72 766.67 593.02 767.59 C588.33 768.51 583.66 769.53 579.02 770.64 C574.37 771.76 569.75 772.97 565.15 774.27 C560.55 775.56 555.98 776.96 551.43 778.44 C546.89 779.92 542.36 781.48 537.87 783.14 C533.38 784.79 528.92 786.52 524.48 788.34 C520.05 790.15 515.64 792.05 511.27 794.02 C506.89 796.00 502.55 798.05 498.24 800.17 C493.93 802.29 489.65 804.49 485.41 806.76 C481.16 809.02 476.95 811.36 472.78 813.76 C468.61 816.16 464.47 818.63 460.37 821.16 C456.27 823.69 452.20 826.28 448.18 828.93 C444.15 831.58 440.16 834.29 436.22 837.05 C432.27 839.81 426.45 844.09 424.50 845.50" fill="none" stroke="#ee8e2c" stroke-width="1.35"/>
<path d="M833.30 940.50 C830.97 939.95 823.98 938.24 819.29 937.20 C814.60 936.16 809.89 935.21 805.18 934.27 C800.47 933.34 795.73 932.47 791.00 931.59 C786.27 930.72 781.53 929.89 776.80 929.03 C772.06 928.17 767.33 927.33 762.60 926.44 C757.87 925.56 753.15 924.67 748.44 923.71 C743.73 922.76 739.03 921.77 734.36 920.70 C729.68 919.63 725.02 918.51 720.39 917.28 C715.75 916.05 711.14 914.75 706.56 913.32 C701.99 911.89 697.43 910.36 692.92 908.69 C688.41 907.01 681.74 904.16 679.50 903.25 L679.50 903.25 C677.12 903.30 669.97 903.42 665.20 903.54 C660.43 903.65 655.67 903.79 650.90 903.95 C646.13 904.11 641.36 904.29 636.60 904.50 C631.83 904.70 627.06 904.93 622.30 905.19 C617.53 905.44 612.77 905.72 608.01 906.03 C603.25 906.34 598.49 906.67 593.73 907.03 C588.97 907.40 584.22 907.78 579.46 908.20 C574.71 908.62 569.96 909.07 565.22 909.55 C560.47 910.03 555.73 910.54 550.99 911.08 C546.25 911.62 541.52 912.20 536.79 912.80 C532.06 913.41 527.34 914.05 522.62 914.73 C517.90 915.40 513.19 916.11 508.48 916.86 C503.77 917.61 499.07 918.39 494.37 919.21 C489.68 920.03 484.99 920.89 480.31 921.78 C475.63 922.68 470.95 923.62 466.28 924.59 C461.62 925.57 456.96 926.58 452.31 927.64 C447.65 928.70 443.01 929.80 438.38 930.94 C433.74 932.09 426.81 933.91 424.50 934.50" fill="none" stroke="#ee8e2c" stroke-width="1.35"/>
<path d="M165 187 A1392.5 1392.5 0 0 1 867.5 449.5 L867.5 832.5 L833.3 832.5 L833.3 971 L424.5 971 L424.5 642.5 L119.5 642.5 Z" fill="none" stroke="#151515" stroke-width="1.1"/>
<path d="M148.60 351.60 C151.81 351.95 161.45 352.96 167.87 353.72 C174.29 354.48 180.70 355.28 187.11 356.14 C193.52 357.00 199.86 357.89 206.31 358.86 C212.76 359.83 219.40 360.88 225.84 361.94 C232.28 363.00 238.58 364.10 244.94 365.25 C251.30 366.40 257.65 367.62 263.99 368.87 C270.33 370.12 276.60 371.40 282.98 372.77 C289.36 374.13 295.92 375.60 302.28 377.06 C308.64 378.52 314.87 380.01 321.14 381.56 C327.41 383.11 333.68 384.71 339.93 386.35 C346.18 388.00 352.36 389.67 358.64 391.43 C364.92 393.19 371.38 395.04 377.64 396.90 C383.90 398.76 390.01 400.63 396.18 402.57 C402.35 404.51 408.50 406.49 414.64 408.52 C420.78 410.55 426.84 412.60 433.00 414.75 C439.16 416.90 445.49 419.16 451.62 421.40 C457.75 423.64 463.74 425.88 469.77 428.20 C475.80 430.51 481.86 432.80 487.82 435.29 C493.78 437.78 499.67 440.29 505.55 443.12 C511.43 445.95 517.40 449.06 523.09 452.25 C528.78 455.44 534.26 458.76 539.68 462.27 C545.10 465.78 550.42 469.47 555.61 473.32 C560.80 477.17 565.84 481.14 570.82 485.35 C575.80 489.56 580.80 494.06 585.50 498.58 C590.20 503.09 594.68 507.68 599.05 512.44 C603.42 517.20 607.64 522.11 611.70 527.13 C615.76 532.15 619.63 537.26 623.40 542.59 C627.17 547.92 630.88 553.53 634.30 559.08 C637.72 564.63 640.91 570.20 643.94 575.90 C646.97 581.60 649.83 587.42 652.50 593.30 C655.17 599.18 657.64 605.10 659.95 611.20 C662.26 617.30 664.44 623.66 666.36 629.89 C668.28 636.12 669.97 642.31 671.48 648.59 C672.99 654.87 674.29 661.22 675.40 667.58 C676.51 673.94 677.43 680.29 678.12 686.77 C678.81 693.25 679.28 699.96 679.51 706.48 C679.74 713.00 679.51 722.64 679.51 725.87 L679.5 988" fill="none" stroke="#151515" stroke-width="1.1"/>
<path d="M148 187 H182 M165 170 V204 M131.5 352 H165.5 M148.5 335 V369 M277.5 375.5 H311.5 M294.5 358.5 V392.5 M850.5 449.5 H884.5 M867.5 432.5 V466.5 M102.5 642.5 H136.5 M119.5 625.5 V659.5 M407.5 642.5 H441.5 M424.5 625.5 V659.5 M662.5 801.5 H696.5 M816.3 832.5 H850.3 M833.3 815.5 V849.5 M850.5 832.5 H884.5 M867.5 815.5 V849.5 M407.5 971 H441.5 M424.5 954 V988 M679.5 954 V988 M816.3 971 H850.3 M833.3 954 V988 " fill="none" stroke="#151515" stroke-width="1.05"/>
<rect x="373" y="720" width="1.2" height="1.2" fill="#888"/>
<rect x="152" y="336" width="28.5" height="12.5" fill="#fff"/>
<rect x="296.5" y="359.5" width="29.5" height="12.5" fill="#fff"/>
<rect x="492" y="421" width="29.5" height="12.5" fill="#fff"/>
<rect x="682.5" y="704.5" width="29" height="12.5" fill="#fff"/>
<rect x="682.5" y="786" width="29" height="12.5" fill="#fff"/>
</svg>
<span class="t" style="left:169.00px;top:172.34px;font-size:10px;color:#222;transform:scaleX(0.9347);">-2.380</span>
<span class="t" style="left:153.00px;top:337.54px;font-size:10px;color:#222;transform:scaleX(0.9347);">-2.380</span>
<span class="t" style="left:298.00px;top:361.04px;font-size:10px;color:#222;transform:scaleX(0.9523);">-2.488</span>
<span class="t" style="left:493.00px;top:422.54px;font-size:10px;color:#222;transform:scaleX(0.9523);">-2.694</span>
<span class="t" style="left:871.00px;top:435.54px;font-size:10px;color:#222;transform:scaleX(0.9523);">-2.695</span>
<span class="t" style="left:89.00px;top:648.53px;font-size:10px;color:#222;transform:scaleX(0.9523);">-2.380</span>
<span class="t" style="left:394.00px;top:648.53px;font-size:10px;color:#222;transform:scaleX(0.9523);">-2.873</span>
<span class="t" style="left:684.00px;top:706.03px;font-size:10px;color:#222;transform:scaleX(0.9347);">-3.058</span>
<span class="t" style="left:684.00px;top:787.53px;font-size:10px;color:#222;transform:scaleX(0.9347);">-3.140</span>
<span class="t" style="left:837.00px;top:838.53px;font-size:10px;color:#222;transform:scaleX(0.9347);">-3.057</span>
<span class="t" style="left:871.00px;top:838.53px;font-size:10px;color:#222;transform:scaleX(0.9523);">-3.039</span>
<span class="t" style="left:394.00px;top:977.03px;font-size:10px;color:#222;transform:scaleX(0.9523);">-3.240</span>
<span class="t" style="left:684.00px;top:977.03px;font-size:10px;color:#222;transform:scaleX(0.9347);">-3.240</span>
<span class="t" style="left:837.00px;top:977.03px;font-size:10px;color:#222;transform:scaleX(0.9347);">-3.240</span>
<span class="t" style="left:524.60px;top:362.09px;font-size:23.4px;color:#0c0c0c;transform:scaleX(0.8210);-webkit-text-stroke:0.3px #0c0c0c;">Beton</span>
<span class="t" style="left:438.60px;top:544.09px;font-size:23.4px;color:#0c0c0c;transform:scaleX(0.8210);-webkit-text-stroke:0.3px #0c0c0c;">Beton</span>
<svg width="1920" height="1080" viewBox="0 0 1920 1080">
<path d="M57 944 H84" stroke="#f3b0b0" stroke-width="1" stroke-dasharray="1 2" fill="none"/><path d="M90 950 V976" stroke="#a8dca8" stroke-width="1.2" stroke-dasharray="1.2 2" fill="none"/>
<rect x="78.5" y="932.5" width="23.5" height="22.5" fill="none" stroke="#cfcfd6" stroke-width="1.1" stroke-dasharray="1.3 2.2"/>
<path d="M90 897 V937" stroke="#1aa51a" stroke-width="1.6"/>
<path d="M97 943.8 H137" stroke="#e01010" stroke-width="1.6"/>
<rect x="83" y="937" width="14" height="14" fill="#0a12d8"/><rect x="89.3" y="943.3" width="1.6" height="1.6" fill="#fff"/>
<g transform="translate(45,1013)"><circle r="6.9" fill="none" stroke="#4a6791" stroke-width="2.2" stroke-dasharray="2.6 2.82"/><rect x="-3" y="-3" width="6" height="6" fill="#f08a8a" stroke="#d33" stroke-width="0.8"/></g>
</svg>
<span class="t" style="left:85.20px;top:879.10px;font-size:16.3px;color:#18a818;font-weight:bold;transform:scaleX(0.9197);">Y</span>
<span class="t" style="left:141.80px;top:936.30px;font-size:16.3px;color:#d01414;font-weight:bold;transform:scaleX(0.9749);">X</span>
<span class="t" style="left:69.00px;top:952.30px;font-size:16.3px;color:#0a0ad0;font-weight:bold;transform:scaleX(0.9844);">Z</span>
<svg width="1920" height="1080" viewBox="0 0 1920 1080" id="persp">
<defs>
<filter id="lt" x="0" y="0" width="100%" height="100%" color-interpolation-filters="sRGB">
<feTurbulence type="fractalNoise" baseFrequency="0.075 0.12" numOctaves="3" seed="11" result="n"/>
<feColorMatrix in="n" type="matrix" values="0.17 0 0 0 0.822  0.17 0 0 0 0.822  0.17 0 0 0 0.822  0 0 0 0 1" result="g"/>
<feComposite in="g" in2="SourceGraphic" operator="in"/>
</filter>
<pattern id="hatch" width="9" height="11" patternUnits="userSpaceOnUse" patternTransform="rotate(-33) skewX(-20)">
<rect width="9" height="1.2" fill="#fff" opacity="0.26"/><rect width="1" height="11" fill="#fff" opacity="0.16"/>
</pattern>
<linearGradient id="dk" gradientUnits="userSpaceOnUse" x1="1405" y1="590" x2="1675" y2="800"><stop offset="0" stop-color="#7e7e7e"/><stop offset="1" stop-color="#a2a2a2"/></linearGradient>
</defs>
<path d="M1018.00 485.00 C1024.79 483.78 1043.42 480.45 1058.75 477.70 C1074.08 474.95 1089.79 471.95 1110.00 468.50 C1130.21 465.05 1157.92 460.42 1180.00 457.00 C1202.08 453.58 1219.17 450.95 1242.50 448.00 C1265.83 445.05 1293.75 441.88 1320.00 439.30 C1346.25 436.72 1380.00 434.00 1400.00 432.50 C1420.00 431.00 1425.00 430.95 1440.00 430.30 C1455.00 429.65 1472.92 428.98 1490.00 428.60 C1507.08 428.22 1533.75 428.10 1542.50 428.00 L1771.9 528.1 L1759.4 537.5 L1877.5 595 L1676.5 795.5 L1405 586.25 L1102.5 693 Z" fill="#e6e6e6" filter="url(#lt)"/>
<path d="M1018.00 485.00 C1024.79 483.78 1043.42 480.45 1058.75 477.70 C1074.08 474.95 1089.79 471.95 1110.00 468.50 C1130.21 465.05 1157.92 460.42 1180.00 457.00 C1202.08 453.58 1219.17 450.95 1242.50 448.00 C1265.83 445.05 1293.75 441.88 1320.00 439.30 C1346.25 436.72 1380.00 434.00 1400.00 432.50 C1420.00 431.00 1425.00 430.95 1440.00 430.30 C1455.00 429.65 1472.92 428.98 1490.00 428.60 C1507.08 428.22 1533.75 428.10 1542.50 428.00 L1771.9 528.1 L1759.4 537.5 L1877.5 595 L1676.5 795.5 L1405 586.25 L1102.5 693 Z" fill="url(#hatch)"/>
<path d="M1102.5 693 L1405 586.25 L1405 599.5 L1108.75 709.25 Z" fill="#f0f0f0"/>
<path d="M1405 586.25 L1676.5 795.5 L1672.2 809.2 L1405 599.5 Z" fill="url(#dk)"/>
<path d="M1877.5 595 L1872.5 607.5 L1672.2 809.2 L1676.5 795.5 Z" fill="#fbfbfb"/>
<path d="M1771.9 528.1 L1767.5 541.3 L1759.4 537.5 Z" fill="#e4e4e4"/>
<path d="M1058.75 478.00 C1059.17 480.83 1060.00 488.00 1061.25 495.00 C1062.50 502.00 1065.21 513.54 1066.25 520.00 C1067.29 526.46 1067.29 531.46 1067.50 533.75 L1067.50 533.75 C1068.03 536.15 1069.52 543.38 1070.69 548.15 C1071.85 552.93 1073.13 557.66 1074.48 562.38 C1075.83 567.10 1077.27 571.79 1078.77 576.46 C1080.27 581.14 1081.85 585.79 1083.46 590.43 C1085.07 595.07 1086.75 599.70 1088.45 604.32 C1090.14 608.93 1091.88 613.54 1093.62 618.14 C1095.36 622.75 1097.13 627.34 1098.88 631.95 C1100.64 636.55 1102.40 641.14 1104.13 645.75 C1105.86 650.36 1107.59 654.97 1109.26 659.59 C1110.93 664.22 1112.59 668.85 1114.17 673.50 C1115.75 678.15 1117.99 685.17 1118.75 687.50" fill="none" stroke="#ef8f2e" stroke-width="1.1"/>
<path d="M1242.50 448.00 C1240.30 449.00 1233.41 451.59 1229.32 453.99 C1225.22 456.39 1221.43 459.28 1217.92 462.40 C1214.41 465.53 1211.19 469.07 1208.24 472.76 C1205.28 476.46 1202.61 480.48 1200.20 484.59 C1197.78 488.70 1195.63 493.05 1193.73 497.41 C1191.82 501.77 1189.58 508.53 1188.75 510.75 L1188.75 510.75 C1187.89 513.18 1184.95 520.44 1183.59 525.33 C1182.23 530.22 1181.28 535.15 1180.57 540.10 C1179.87 545.04 1179.52 550.03 1179.37 555.02 C1179.22 560.01 1179.37 565.02 1179.66 570.04 C1179.95 575.06 1180.48 580.10 1181.11 585.13 C1181.73 590.16 1182.55 595.21 1183.40 600.24 C1184.25 605.27 1185.25 610.31 1186.21 615.32 C1187.18 620.34 1188.24 625.35 1189.22 630.34 C1190.20 635.33 1191.21 640.30 1192.09 645.25 C1192.97 650.19 1194.10 657.54 1194.50 660.00" fill="none" stroke="#ef8f2e" stroke-width="1.1"/>
<path d="M1400.00 432.50 C1397.64 433.07 1390.57 434.67 1385.86 435.90 C1381.16 437.13 1376.44 438.44 1371.77 439.88 C1367.10 441.31 1362.43 442.83 1357.82 444.48 C1353.21 446.13 1348.63 447.89 1344.11 449.78 C1339.60 451.67 1335.13 453.67 1330.75 455.82 C1326.36 457.97 1322.04 460.24 1317.82 462.66 C1313.60 465.09 1309.46 467.65 1305.43 470.37 C1301.41 473.10 1297.48 475.96 1293.68 479.00 C1289.89 482.04 1286.20 485.23 1282.67 488.61 C1279.14 491.98 1274.20 497.48 1272.50 499.25 L1272.50 499.25 C1271.47 501.40 1268.09 507.80 1266.31 512.16 C1264.53 516.53 1263.08 520.97 1261.84 525.44 C1260.60 529.92 1259.65 534.46 1258.87 539.02 C1258.09 543.59 1257.55 548.20 1257.16 552.83 C1256.77 557.47 1256.58 562.14 1256.50 566.82 C1256.42 571.49 1256.51 576.20 1256.66 580.90 C1256.81 585.60 1257.10 590.32 1257.41 595.03 C1257.73 599.73 1258.14 604.45 1258.54 609.13 C1258.94 613.82 1259.40 618.50 1259.81 623.14 C1260.22 627.79 1260.80 634.69 1261.00 637.00" fill="none" stroke="#ef8f2e" stroke-width="1.1"/>
<path d="M1542.50 428.50 C1540.12 429.03 1532.98 430.64 1528.19 431.66 C1523.41 432.68 1518.60 433.66 1513.79 434.63 C1508.98 435.61 1504.15 436.56 1499.33 437.52 C1494.50 438.49 1489.67 439.44 1484.85 440.42 C1480.03 441.41 1475.21 442.40 1470.40 443.44 C1465.60 444.49 1460.80 445.55 1456.03 446.68 C1451.25 447.81 1446.49 448.98 1441.77 450.23 C1437.04 451.49 1432.33 452.79 1427.66 454.20 C1423.00 455.62 1418.35 457.10 1413.76 458.70 C1409.17 460.30 1404.61 461.99 1400.10 463.81 C1395.60 465.64 1391.13 467.57 1386.73 469.65 C1382.32 471.73 1377.97 473.93 1373.68 476.31 C1369.40 478.68 1365.16 481.19 1361.01 483.89 C1356.85 486.59 1350.79 491.07 1348.75 492.50 L1348.75 492.50 C1346.95 494.28 1341.08 499.40 1337.93 503.20 C1334.78 506.99 1332.16 511.05 1329.86 515.26 C1327.57 519.46 1325.74 523.89 1324.18 528.42 C1322.61 532.95 1321.45 537.66 1320.50 542.43 C1319.54 547.20 1318.93 552.10 1318.46 557.02 C1317.99 561.94 1317.79 566.95 1317.68 571.93 C1317.58 576.92 1317.68 581.95 1317.81 586.91 C1317.93 591.87 1318.21 596.84 1318.45 601.68 C1318.69 606.53 1319.12 613.61 1319.25 616.00" fill="none" stroke="#ef8f2e" stroke-width="1.1"/>
<path d="M1600.00 453.75 C1597.71 454.12 1590.84 455.26 1586.24 455.97 C1581.64 456.68 1577.02 457.35 1572.40 458.02 C1567.77 458.69 1563.14 459.33 1558.50 459.98 C1553.86 460.63 1549.21 461.27 1544.57 461.93 C1539.93 462.59 1535.28 463.25 1530.64 463.95 C1526.01 464.66 1521.37 465.37 1516.74 466.13 C1512.12 466.90 1507.50 467.69 1502.90 468.54 C1498.29 469.40 1493.70 470.30 1489.13 471.27 C1484.56 472.25 1480.01 473.28 1475.48 474.40 C1470.95 475.52 1466.44 476.71 1461.96 478.00 C1457.48 479.30 1453.02 480.67 1448.60 482.17 C1444.18 483.66 1439.79 485.25 1435.44 486.97 C1431.09 488.69 1424.66 491.58 1422.50 492.50 L1422.50 492.50 C1420.25 493.90 1413.19 497.79 1409.01 500.92 C1404.82 504.05 1400.94 507.56 1397.39 511.28 C1393.83 515.01 1390.60 519.06 1387.70 523.29 C1384.81 527.52 1382.24 532.02 1380.03 536.64 C1377.82 541.26 1375.94 546.11 1374.43 551.03 C1372.92 555.96 1371.76 561.05 1370.97 566.17 C1370.19 571.30 1369.76 576.54 1369.72 581.76 C1369.69 586.98 1370.58 594.88 1370.75 597.50" fill="none" stroke="#ef8f2e" stroke-width="1.1"/>
<path d="M1663.75 482.00 C1661.22 482.25 1653.64 483.03 1648.58 483.48 C1643.51 483.94 1638.44 484.33 1633.37 484.73 C1628.29 485.13 1623.21 485.48 1618.13 485.85 C1613.05 486.22 1607.97 486.58 1602.89 486.96 C1597.81 487.34 1592.73 487.72 1587.66 488.16 C1582.59 488.59 1577.52 489.03 1572.46 489.55 C1567.41 490.06 1562.35 490.61 1557.31 491.25 C1552.27 491.88 1547.24 492.57 1542.22 493.36 C1537.20 494.15 1532.20 495.01 1527.21 495.99 C1522.22 496.97 1517.25 498.04 1512.30 499.25 C1507.35 500.46 1499.97 502.58 1497.50 503.25 L1497.50 503.25 C1495.37 504.25 1489.02 507.07 1484.72 509.23 C1480.43 511.39 1476.01 513.72 1471.73 516.23 C1467.45 518.74 1463.14 521.41 1459.05 524.28 C1454.96 527.15 1450.93 530.20 1447.20 533.44 C1443.48 536.68 1439.90 540.10 1436.71 543.73 C1433.53 547.35 1430.57 551.17 1428.10 555.19 C1425.63 559.21 1423.47 563.43 1421.89 567.86 C1420.30 572.30 1419.12 576.93 1418.60 581.79 C1418.07 586.64 1418.72 594.46 1418.75 597.00" fill="none" stroke="#ef8f2e" stroke-width="1.1"/>
<path d="M1738.75 514.25 C1736.42 514.77 1729.42 516.50 1724.74 517.37 C1720.06 518.24 1715.37 518.91 1710.67 519.48 C1705.97 520.05 1701.25 520.45 1696.53 520.77 C1691.82 521.09 1687.09 521.28 1682.35 521.42 C1677.62 521.56 1672.88 521.60 1668.14 521.62 C1663.40 521.64 1658.66 521.58 1653.91 521.55 C1649.16 521.51 1644.41 521.42 1639.67 521.39 C1634.92 521.35 1630.17 521.30 1625.43 521.33 C1620.68 521.35 1615.94 521.40 1611.20 521.55 C1606.47 521.70 1601.73 521.90 1597.01 522.24 C1592.28 522.58 1587.56 522.99 1582.85 523.58 C1578.14 524.16 1571.10 525.39 1568.75 525.75 L1568.75 525.75 C1566.53 526.67 1559.82 529.22 1555.42 531.25 C1551.02 533.28 1546.61 535.51 1542.34 537.93 C1538.07 540.35 1533.84 542.96 1529.78 545.75 C1525.73 548.53 1521.76 551.51 1518.01 554.66 C1514.27 557.80 1510.65 561.13 1507.30 564.62 C1503.94 568.11 1500.77 571.77 1497.90 575.59 C1495.03 579.41 1492.38 583.39 1490.08 587.52 C1487.79 591.65 1485.76 595.94 1484.12 600.37 C1482.49 604.80 1481.16 609.38 1480.28 614.10 C1479.39 618.81 1478.86 623.67 1478.81 628.65 C1478.77 633.64 1479.80 641.44 1480.00 644.00" fill="none" stroke="#ef8f2e" stroke-width="1.1"/>
<path d="M1783.75 550.00 C1781.36 550.58 1774.19 552.48 1769.38 553.50 C1764.58 554.51 1759.75 555.36 1754.91 556.11 C1750.07 556.85 1745.22 557.44 1740.36 557.95 C1735.49 558.46 1730.61 558.84 1725.73 559.16 C1720.85 559.48 1715.95 559.69 1711.05 559.85 C1706.15 560.02 1701.25 560.10 1696.34 560.16 C1691.43 560.22 1686.52 560.21 1681.61 560.20 C1676.70 560.19 1671.79 560.14 1666.88 560.11 C1661.98 560.07 1657.07 560.02 1652.17 560.00 C1647.28 559.98 1639.95 560.00 1637.50 560.00 L1637.50 560.00 C1635.37 561.15 1628.86 564.40 1624.70 566.88 C1620.54 569.36 1616.47 572.03 1612.56 574.86 C1608.65 577.69 1604.85 580.71 1601.22 583.87 C1597.60 587.03 1594.11 590.36 1590.82 593.82 C1587.53 597.28 1584.40 600.89 1581.50 604.63 C1578.59 608.37 1575.87 612.25 1573.39 616.23 C1570.92 620.22 1568.64 624.34 1566.64 628.55 C1564.64 632.75 1562.89 637.08 1561.37 641.49 C1559.85 645.89 1558.62 650.41 1557.52 654.98 C1556.41 659.56 1555.55 664.23 1554.76 668.95 C1553.97 673.67 1553.36 678.48 1552.77 683.32 C1552.19 688.16 1551.50 695.55 1551.25 698.00" fill="none" stroke="#ef8f2e" stroke-width="1.1"/>
<path d="M1850.00 581.25 C1847.77 582.39 1841.10 585.81 1836.63 588.08 C1832.16 590.36 1827.70 592.68 1823.20 594.90 C1818.71 597.13 1814.20 599.35 1809.64 601.44 C1805.09 603.53 1800.51 605.57 1795.87 607.43 C1791.23 609.30 1786.56 611.07 1781.81 612.62 C1777.06 614.17 1772.26 615.58 1767.38 616.73 C1762.49 617.88 1754.98 619.04 1752.50 619.50 L1752.50 619.50 C1750.67 621.06 1745.14 625.69 1741.55 628.88 C1737.96 632.07 1734.44 635.33 1730.98 638.64 C1727.52 641.95 1724.12 645.32 1720.78 648.75 C1717.44 652.18 1714.16 655.67 1710.94 659.20 C1707.72 662.74 1704.56 666.33 1701.46 669.97 C1698.36 673.61 1695.31 677.30 1692.33 681.04 C1689.34 684.77 1686.41 688.56 1683.53 692.38 C1680.66 696.20 1677.84 700.08 1675.07 703.98 C1672.31 707.89 1669.60 711.84 1666.94 715.83 C1664.28 719.81 1661.68 723.83 1659.12 727.89 C1656.57 731.94 1654.07 736.03 1651.62 740.15 C1649.16 744.27 1646.76 748.42 1644.41 752.59 C1642.06 756.77 1638.65 763.10 1637.50 765.20" fill="none" stroke="#ef8f2e" stroke-width="1.1"/>
<path d="M1018.00 485.00 C1024.79 483.78 1043.42 480.45 1058.75 477.70 C1074.08 474.95 1089.79 471.95 1110.00 468.50 C1130.21 465.05 1157.92 460.42 1180.00 457.00 C1202.08 453.58 1219.17 450.95 1242.50 448.00 C1265.83 445.05 1293.75 441.88 1320.00 439.30 C1346.25 436.72 1380.00 434.00 1400.00 432.50 C1420.00 431.00 1425.00 430.95 1440.00 430.30 C1455.00 429.65 1472.92 428.98 1490.00 428.60 C1507.08 428.22 1533.75 428.10 1542.50 428.00 L1771.9 528.1 L1759.4 537.5 L1877.5 595 L1676.5 795.5 L1405 586.25 L1102.5 693 Z" fill="none" stroke="#1a1a1a" stroke-width="1.05" stroke-linejoin="round"/>
<path d="M1102.5 693 L1108.75 709.25 L1405 599.5 L1672.2 809.2 L1872.5 607.5 L1877.5 595 M1405 586.25 V599.5 M1676.5 795.5 L1672.2 809.2 M1771.9 528.1 L1767.5 541.3" fill="none" stroke="#1a1a1a" stroke-width="1.05" stroke-linejoin="round"/>
<path d="M1041.25 539.25 C1052.71 536.67 1085.42 528.50 1110.00 523.75 C1134.58 519.00 1161.67 514.83 1188.75 510.75 C1215.83 506.67 1246.04 502.29 1272.50 499.25 C1298.96 496.21 1328.75 493.83 1347.50 492.50 C1366.25 491.17 1372.50 491.25 1385.00 491.25 C1397.50 491.25 1413.33 492.04 1422.50 492.50 C1431.67 492.96 1427.50 492.21 1440.00 494.00 C1452.50 495.79 1476.04 497.96 1497.50 503.25 C1518.96 508.54 1545.42 516.29 1568.75 525.75 C1592.08 535.21 1617.29 549.71 1637.50 560.00 C1657.71 570.29 1670.83 577.58 1690.00 587.50 C1709.17 597.42 1731.25 608.53 1752.50 619.50 C1773.75 630.47 1806.67 647.67 1817.50 653.30 M1818 653.7 L1815 664" fill="none" stroke="#1a1a1a" stroke-width="1.05"/>
<path d="M1014 952.5 L996 959" stroke="#f3b0b8" stroke-width="1" stroke-dasharray="1.2 2" fill="none"/><path d="M1041 953.5 L1051 959" stroke="#bfe6bf" stroke-width="1" stroke-dasharray="1.2 2" fill="none"/>
<polygon points="1027,928 1045.6,938.5 1045.6,956 1026.5,967 1010.6,956 1010.6,939.5" fill="none" stroke="#8a8a8a" stroke-width="0.9" stroke-dasharray="1.6 2.6"/>
<path d="M1028 895 V934" stroke="#0a12c8" stroke-width="1.8"/>
<path d="M1006.2 931.2 L1017 938.5" stroke="#18a018" stroke-width="1.6"/>
<path d="M1040 939.5 L1053.8 933.2" stroke="#d01818" stroke-width="1.6"/>
<polygon points="1016.2,938.8 1028,933 1040,939.3 1027.3,945" fill="#0a12e0"/>
<polygon points="1016.2,938.8 1027.3,945 1027.3,959 1017,952.5" fill="#f77"/>
<polygon points="1027.3,945 1040,939.3 1039.5,953 1027.3,959" fill="#6e6"/>
<g transform="translate(977,1013)"><circle r="6.9" fill="none" stroke="#4a6791" stroke-width="2.2" stroke-dasharray="2.6 2.82"/><rect x="-2.6" y="-2.6" width="5.2" height="5.2" fill="#eee" stroke="#aaa" stroke-width="0.8"/></g>
<rect x="968.5" y="135.5" width="14" height="14" fill="#8fa3c4" stroke="#4a6aa0" stroke-width="1"/>
<path d="M975.6 138.3 v1.8 M974 142 h2 v5 M973.5 147.2 h4.4" stroke="#fff" stroke-width="1.6" fill="none"/>
<rect x="1859.2" y="137.2" width="9.6" height="7.8" fill="none" stroke="#2f5597" stroke-width="1.8"/>
<path d="M1874.5 137.2 L1883.5 145.5 M1883.5 137.2 L1874.5 145.5" stroke="#2f5597" stroke-width="2.4" fill="none"/>
</svg>
<span class="t" style="left:1022.00px;top:877.00px;font-size:16.3px;color:#0a0ac0;font-weight:bold;transform:scaleX(1.0245);">Z</span>
<span class="t" style="left:992.00px;top:918.90px;font-size:16.3px;color:#18a018;font-weight:bold;transform:scaleX(0.9197);">Y</span>
<span class="t" style="left:1057.50px;top:921.10px;font-size:16.3px;color:#cc1414;font-weight:bold;transform:scaleX(0.9657);">X</span>
</div>
</body></html>
